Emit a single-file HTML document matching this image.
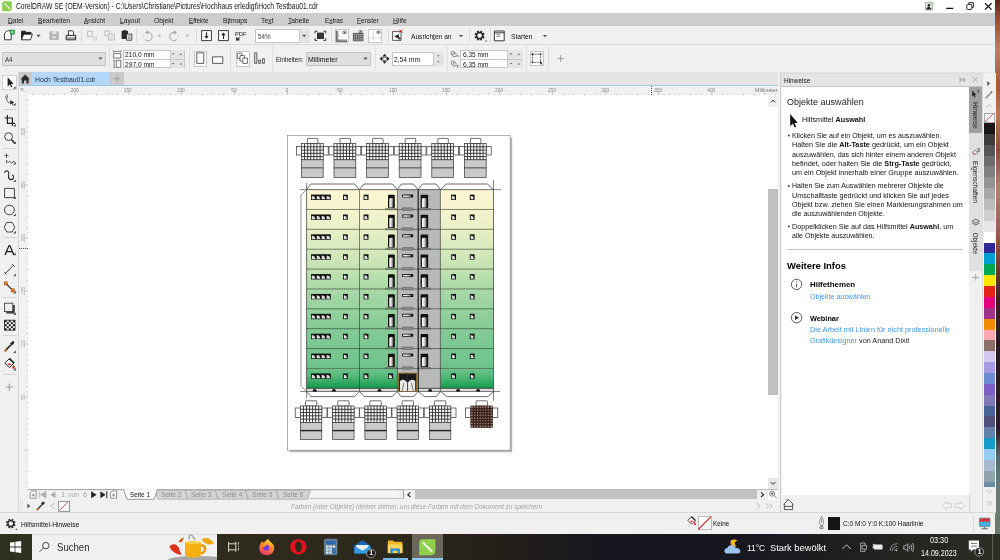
<!DOCTYPE html>
<html lang="de"><head><meta charset="utf-8"><title>CorelDRAW SE</title>
<style>
*{margin:0;padding:0;box-sizing:border-box}
html,body{width:1000px;height:560px;overflow:hidden}
body{position:relative;background:#f0f0f0;font-family:"Liberation Sans",sans-serif;color:#1a1a1a}
.a{position:absolute}
.t{position:absolute;white-space:nowrap;transform-origin:0 50%;display:block}
#root{position:absolute;left:0;top:0;width:1000px;height:560px;will-change:transform;overflow:hidden}
.t b{font-weight:bold}
svg{position:absolute;overflow:visible}
u{text-decoration:underline;text-decoration-thickness:0.5px;text-underline-offset:-0.3px;text-decoration-color:rgba(20,20,20,0.6)}
</style></head><body><div id="root">
<div class="a" style="left:995px;top:0px;width:5px;height:560px;background:linear-gradient(180deg,#5a2a18 0px,#9a5030 20px,#c08060 50px,#a05a3a 85px,#b4785a 115px,#8a4e3c 150px,#b08472 190px,#935c4a 235px,#6a3a30 270px,#40201e 300px,#2a1a22 340px,#2a1e26 430px,#54696c 455px,#66797a 480px,#6a7a6a 534px);"></div>
<div class="a" style="left:0px;top:0px;width:995.3px;height:533.9px;background:#f0f0f0;"></div>
<div class="a" style="left:0px;top:0px;width:995.3px;height:13.5px;background:#ffffff;"></div>
<div class="a" style="left:0px;top:13.2px;width:995.3px;height:12.9px;background:#cdcdcd;"></div>
<div class="a" style="left:0px;top:44px;width:995.3px;height:0.8px;background:#dcdcdc;"></div>
<div class="a" style="left:80.5px;top:28px;width:0.8px;height:15px;background:#dadada;"></div>
<div class="a" style="left:136px;top:28px;width:0.8px;height:15px;background:#dadada;"></div>
<div class="a" style="left:195.8px;top:28px;width:0.8px;height:15px;background:#dadada;"></div>
<div class="a" style="left:331px;top:28px;width:0.8px;height:15px;background:#dadada;"></div>
<div class="a" style="left:387.6px;top:28px;width:0.8px;height:15px;background:#dadada;"></div>
<div class="a" style="left:468.6px;top:28px;width:0.8px;height:15px;background:#dadada;"></div>
<div class="a" style="left:490.4px;top:28px;width:0.8px;height:15px;background:#dadada;"></div>
<div class="a" style="left:109px;top:46px;width:0.8px;height:25px;background:#e0e0e0;"></div>
<div class="a" style="left:189px;top:46px;width:0.8px;height:25px;background:#e0e0e0;"></div>
<div class="a" style="left:230px;top:46px;width:0.8px;height:25px;background:#e0e0e0;"></div>
<div class="a" style="left:271.6px;top:46px;width:0.8px;height:25px;background:#e0e0e0;"></div>
<div class="a" style="left:375px;top:46px;width:0.8px;height:25px;background:#e0e0e0;"></div>
<div class="a" style="left:447px;top:46px;width:0.8px;height:25px;background:#e0e0e0;"></div>
<div class="a" style="left:526px;top:46px;width:0.8px;height:25px;background:#e0e0e0;"></div>
<div class="a" style="left:548px;top:46px;width:0.8px;height:25px;background:#e0e0e0;"></div>
<div class="a" style="left:255px;top:28.5px;width:55px;height:14.8px;background:#fff;border:0.7px solid #c2c2c2"></div>
<div class="a" style="left:298.5px;top:29.2px;width:11px;height:14.1px;background:#e2e2e2;border-left:0.7px solid #c6c6c6"></div>
<div class="a" style="left:2px;top:51.5px;width:103.5px;height:14px;background:#dfdfdf;border:0.7px solid #c4c4c4"></div>
<div class="a" style="left:122.5px;top:49.5px;width:62px;height:18.7px;background:#fff;border:0.7px solid #c6c6c6"></div>
<div class="a" style="left:169.5px;top:50px;width:14.5px;height:17.7px;background:#e4e4e4;border-left:0.7px solid #c6c6c6"></div>
<div class="a" style="left:122.5px;top:58.5px;width:62px;height:0.7px;background:#c6c6c6;"></div>
<div class="a" style="left:193.5px;top:50.5px;width:13.5px;height:16.5px;background:#fff;border:0.7px solid #c6c6c6"></div>
<div class="a" style="left:235.5px;top:50.5px;width:14px;height:16.5px;background:#fff;border:0.7px solid #c6c6c6"></div>
<div class="a" style="left:305.5px;top:51.5px;width:65.5px;height:14px;background:#dfdfdf;border:0.7px solid #c4c4c4"></div>
<div class="a" style="left:391.5px;top:51.5px;width:52.5px;height:14.5px;background:#fff;border:0.7px solid #c6c6c6"></div>
<div class="a" style="left:433px;top:52px;width:10.5px;height:13.5px;background:#e4e4e4;border-left:0.7px solid #c6c6c6"></div>
<div class="a" style="left:459.5px;top:49.5px;width:63.5px;height:18.7px;background:#fff;border:0.7px solid #c6c6c6"></div>
<div class="a" style="left:507px;top:50px;width:15.5px;height:17.7px;background:#e4e4e4;border-left:0.7px solid #c6c6c6"></div>
<div class="a" style="left:459.5px;top:58.5px;width:63.5px;height:0.7px;background:#c6c6c6;"></div>
<div class="a" style="left:529.5px;top:51px;width:14.5px;height:15px;background:#fff;border:0.7px solid #c6c6c6"></div>
<div class="a" style="left:334.5px;top:28.5px;width:14px;height:14.5px;background:#fff;border:0.7px solid #c6c6c6"></div>
<div class="a" style="left:368px;top:28.5px;width:14px;height:14.5px;background:#fff;border:0.7px solid #c6c6c6"></div>
<div class="a" style="left:0px;top:72px;width:995.3px;height:14px;background:#e4e4e4;"></div>
<div class="a" style="left:0px;top:72px;width:18.5px;height:14px;background:#f0f0f0;"></div>
<div class="a" style="left:19px;top:72px;width:12.5px;height:13.3px;background:#c8c8c8;"></div>
<div class="a" style="left:31.5px;top:72px;width:78.5px;height:13.3px;background:#b5d7f7;"></div>
<div class="a" style="left:110px;top:72px;width:13.5px;height:13.3px;background:#c9c9c9;"></div>
<div class="a" style="left:19px;top:84.9px;width:759px;height:1.5px;background:#9ccbea;"></div>
<div class="a" style="left:0px;top:72px;width:18.5px;height:441px;background:#f0f0f0;"></div>
<div class="a" style="left:18.3px;top:72px;width:0.8px;height:441px;background:#d6d6d6;"></div>
<div class="a" style="left:2px;top:74.5px;width:14.5px;height:15px;background:#fff;border:0.7px solid #cfcfcf"></div>
<div class="a" style="left:2.5px;top:109px;width:14px;height:0.8px;background:#d4d4d4;"></div>
<div class="a" style="left:2.5px;top:148px;width:14px;height:0.8px;background:#d4d4d4;"></div>
<div class="a" style="left:2.5px;top:237px;width:14px;height:0.8px;background:#d4d4d4;"></div>
<div class="a" style="left:2.5px;top:297px;width:14px;height:0.8px;background:#d4d4d4;"></div>
<div class="a" style="left:2.5px;top:335px;width:14px;height:0.8px;background:#d4d4d4;"></div>
<div class="a" style="left:2.5px;top:374px;width:14px;height:0.8px;background:#d4d4d4;"></div>
<div class="a" style="left:19px;top:86.3px;width:759px;height:9px;background:#f1f1f1;"></div>
<div class="a" style="left:19px;top:86.3px;width:9px;height:403px;background:#f1f1f1;"></div>
<div class="a" style="left:28px;top:95.3px;width:750px;height:393.5px;background:#ffffff;"></div>
<div class="a" style="left:768px;top:96px;width:10px;height:10.5px;background:#f0f0f0;"></div>
<div class="a" style="left:768px;top:189px;width:9.5px;height:206px;background:#c1c1c1;"></div>
<div class="a" style="left:768px;top:478px;width:10px;height:10.8px;background:#e8e8e8;"></div>
<div class="a" style="left:28px;top:488.8px;width:750px;height:0.9px;background:#bdbdbd;"></div>
<div class="a" style="left:19px;top:489.6px;width:759px;height:10px;background:#f0f0f0;"></div>
<div class="a" style="left:310px;top:489.6px;width:93.5px;height:9.6px;background:#f4f4f4;border-bottom:0.7px solid #c4c4c4;border-right:0.8px solid #999"></div>
<div class="a" style="left:404.5px;top:489.8px;width:363.5px;height:9.6px;background:#f0f0f0;"></div>
<div class="a" style="left:415px;top:490px;width:342px;height:9.3px;background:#c1c1c1;"></div>
<div class="a" style="left:768px;top:489.6px;width:10px;height:10px;background:#fff;"></div>
<div class="a" style="left:58px;top:500.5px;width:11.5px;height:11px;background:#fff;border:0.7px solid #999"></div>
<div class="a" style="left:778px;top:72px;width:3px;height:441px;background:#f0f0f0;"></div>
<div class="a" style="left:780.3px;top:72px;width:0.9px;height:441px;background:#d0d0d0;"></div>
<div class="a" style="left:781px;top:72.5px;width:201.5px;height:14px;background:#e4e4e4;border-bottom:0.8px solid #c6c6c6;border-top:0.8px solid #dadada"></div>
<div class="a" style="left:781.5px;top:87px;width:187.5px;height:407.5px;background:#ffffff;"></div>
<div class="a" style="left:787px;top:248.5px;width:176px;height:0.8px;background:#c4c4c4;"></div>
<div class="a" style="left:969px;top:87px;width:14px;height:425px;background:#f0f0f0;"></div>
<div class="a" style="left:969px;top:87px;width:13.5px;height:184px;background:#e0e0e0;"></div>
<div class="a" style="left:969px;top:87px;width:13.5px;height:46px;background:#a0a0a0;"></div>
<div class="a" style="left:983px;top:72.5px;width:12.5px;height:440px;background:#f0f0f0;"></div>
<div class="a" style="left:984px;top:112.5px;width:10.5px;height:10.5px;background:#fff;border:0.5px solid #aaa"></div>
<div class="a" style="left:984px;top:123.0px;width:10.5px;height:10.97px;background:#181818;"></div>
<div class="a" style="left:984px;top:133.87px;width:10.5px;height:10.97px;background:#3c3c3c;"></div>
<div class="a" style="left:984px;top:144.74px;width:10.5px;height:10.97px;background:#565656;"></div>
<div class="a" style="left:984px;top:155.61px;width:10.5px;height:10.97px;background:#6c6c6c;"></div>
<div class="a" style="left:984px;top:166.48px;width:10.5px;height:10.97px;background:#808080;"></div>
<div class="a" style="left:984px;top:177.35px;width:10.5px;height:10.97px;background:#949494;"></div>
<div class="a" style="left:984px;top:188.22px;width:10.5px;height:10.97px;background:#a8a8a8;"></div>
<div class="a" style="left:984px;top:199.09px;width:10.5px;height:10.97px;background:#bcbcbc;"></div>
<div class="a" style="left:984px;top:209.96px;width:10.5px;height:10.97px;background:#d0d0d0;"></div>
<div class="a" style="left:984px;top:220.83px;width:10.5px;height:10.97px;background:#e6e6e6;"></div>
<div class="a" style="left:984px;top:231.7px;width:10.5px;height:10.97px;background:#ffffff;"></div>
<div class="a" style="left:984px;top:242.57px;width:10.5px;height:10.97px;background:#2e2a96;"></div>
<div class="a" style="left:984px;top:253.44px;width:10.5px;height:10.97px;background:#00a0d2;"></div>
<div class="a" style="left:984px;top:264.31px;width:10.5px;height:10.97px;background:#00a651;"></div>
<div class="a" style="left:984px;top:275.18px;width:10.5px;height:10.97px;background:#ffe600;"></div>
<div class="a" style="left:984px;top:286.05px;width:10.5px;height:10.97px;background:#e2231a;"></div>
<div class="a" style="left:984px;top:296.92px;width:10.5px;height:10.97px;background:#e6007e;"></div>
<div class="a" style="left:984px;top:307.79px;width:10.5px;height:10.97px;background:#a0328c;"></div>
<div class="a" style="left:984px;top:318.66px;width:10.5px;height:10.97px;background:#f08c00;"></div>
<div class="a" style="left:984px;top:329.53px;width:10.5px;height:10.97px;background:#ffa8b4;"></div>
<div class="a" style="left:984px;top:340.4px;width:10.5px;height:10.97px;background:#8c6e64;"></div>
<div class="a" style="left:984px;top:351.27px;width:10.5px;height:10.97px;background:#d2c8f0;"></div>
<div class="a" style="left:984px;top:362.14px;width:10.5px;height:10.97px;background:#a59be1;"></div>
<div class="a" style="left:984px;top:373.01px;width:10.5px;height:10.97px;background:#6e8cd2;"></div>
<div class="a" style="left:984px;top:383.88px;width:10.5px;height:10.97px;background:#7d5fc3;"></div>
<div class="a" style="left:984px;top:394.75px;width:10.5px;height:10.97px;background:#8278b4;"></div>
<div class="a" style="left:984px;top:405.62px;width:10.5px;height:10.97px;background:#466496;"></div>
<div class="a" style="left:984px;top:416.49px;width:10.5px;height:10.97px;background:#505078;"></div>
<div class="a" style="left:984px;top:427.36px;width:10.5px;height:10.97px;background:#6482aa;"></div>
<div class="a" style="left:984px;top:438.23px;width:10.5px;height:10.97px;background:#149bc8;"></div>
<div class="a" style="left:984px;top:449.1px;width:10.5px;height:10.97px;background:#96cdf0;"></div>
<div class="a" style="left:984px;top:459.97px;width:10.5px;height:10.97px;background:#a5b9d2;"></div>
<div class="a" style="left:984px;top:470.84px;width:10.5px;height:10.97px;background:#8ca5af;"></div>
<div class="a" style="left:984px;top:481.71px;width:10.5px;height:5.39px;background:#6e8ca0;"></div>
<div class="a" style="left:969.3px;top:494.5px;width:0.8px;height:18px;background:#d4d4d4;"></div>
<div class="a" style="left:982px;top:72.5px;width:0.8px;height:440px;background:#dcdcdc;"></div>
<div class="a" style="left:0px;top:512.2px;width:995.3px;height:0.8px;background:#d8d8d8;"></div>
<div class="a" style="left:697.5px;top:516px;width:14px;height:14px;background:#fff;border:0.7px solid #bbb"></div>
<div class="a" style="left:827.5px;top:516.5px;width:12.5px;height:13.5px;background:#141414;"></div>
<div class="a" style="left:973.2px;top:516px;width:0.8px;height:14.5px;background:#dcdcdc;"></div>
<div class="a" style="left:0px;top:533.9px;width:1000px;height:26.1px;background:linear-gradient(90deg,#2d3220 0%,#2f2c1e 22%,#2c281c 40%,#241f19 50%,#18171f 60%,#15151e 68%,#1b1a21 78%,#20211f 86%,#262922 95%,#2c2f24 100%);"></div>
<div class="a" style="left:31.5px;top:533.9px;width:185.5px;height:26.1px;background:#f0f0f0;border-top:0.8px solid #dcdcdc"></div>
<div class="a" style="left:412px;top:533.9px;width:31px;height:26.1px;background:#6b675b;"></div>
<div class="a" style="left:382.5px;top:557.6px;width:25.5px;height:2.4px;background:#76b9ed;"></div>
<div class="a" style="left:412px;top:557.6px;width:31px;height:2.4px;background:#8ccaf5;"></div>
<svg style="left:0;top:0" width="1000" height="560" viewBox="0 0 1000 560">
<path d="M32.77 93.6V95.3M38.08 94.4V95.3M43.38 93.6V95.3M48.69 94.4V95.3M53.99 93.6V95.3M59.30 94.4V95.3M64.60 93.6V95.3M69.90 94.4V95.3M75.21 91.5V95.3M80.51 94.4V95.3M85.82 93.6V95.3M91.12 94.4V95.3M96.43 93.6V95.3M101.73 94.4V95.3M107.04 93.6V95.3M112.34 94.4V95.3M117.65 93.6V95.3M122.95 94.4V95.3M128.26 91.5V95.3M133.56 94.4V95.3M138.87 93.6V95.3M144.17 94.4V95.3M149.48 93.6V95.3M154.78 94.4V95.3M160.09 93.6V95.3M165.39 94.4V95.3M170.70 93.6V95.3M176.00 94.4V95.3M181.30 91.5V95.3M186.61 94.4V95.3M191.91 93.6V95.3M197.22 94.4V95.3M202.52 93.6V95.3M207.83 94.4V95.3M213.13 93.6V95.3M218.44 94.4V95.3M223.74 93.6V95.3M229.05 94.4V95.3M234.35 91.5V95.3M239.66 94.4V95.3M244.96 93.6V95.3M250.27 94.4V95.3M255.57 93.6V95.3M260.88 94.4V95.3M266.18 93.6V95.3M271.49 94.4V95.3M276.79 93.6V95.3M282.10 94.4V95.3M287.40 91.5V95.3M292.70 94.4V95.3M298.01 93.6V95.3M303.31 94.4V95.3M308.62 93.6V95.3M313.92 94.4V95.3M319.23 93.6V95.3M324.53 94.4V95.3M329.84 93.6V95.3M335.14 94.4V95.3M340.45 91.5V95.3M345.75 94.4V95.3M351.06 93.6V95.3M356.36 94.4V95.3M361.67 93.6V95.3M366.97 94.4V95.3M372.28 93.6V95.3M377.58 94.4V95.3M382.89 93.6V95.3M388.19 94.4V95.3M393.50 91.5V95.3M398.80 94.4V95.3M404.10 93.6V95.3M409.41 94.4V95.3M414.71 93.6V95.3M420.02 94.4V95.3M425.32 93.6V95.3M430.63 94.4V95.3M435.93 93.6V95.3M441.24 94.4V95.3M446.54 91.5V95.3M451.85 94.4V95.3M457.15 93.6V95.3M462.46 94.4V95.3M467.76 93.6V95.3M473.07 94.4V95.3M478.37 93.6V95.3M483.68 94.4V95.3M488.98 93.6V95.3M494.29 94.4V95.3M499.59 91.5V95.3M504.90 94.4V95.3M510.20 93.6V95.3M515.50 94.4V95.3M520.81 93.6V95.3M526.11 94.4V95.3M531.42 93.6V95.3M536.72 94.4V95.3M542.03 93.6V95.3M547.33 94.4V95.3M552.64 91.5V95.3M557.94 94.4V95.3M563.25 93.6V95.3M568.55 94.4V95.3M573.86 93.6V95.3M579.16 94.4V95.3M584.47 93.6V95.3M589.77 94.4V95.3M595.08 93.6V95.3M600.38 94.4V95.3M605.69 91.5V95.3M610.99 94.4V95.3M616.30 93.6V95.3M621.60 94.4V95.3M626.90 93.6V95.3M632.21 94.4V95.3M637.51 93.6V95.3M642.82 94.4V95.3M648.12 93.6V95.3M653.43 94.4V95.3M658.73 91.5V95.3M664.04 94.4V95.3M669.34 93.6V95.3M674.65 94.4V95.3M679.95 93.6V95.3M685.26 94.4V95.3M690.56 93.6V95.3M695.87 94.4V95.3M701.17 93.6V95.3M706.48 94.4V95.3M711.78 91.5V95.3M717.09 94.4V95.3M722.39 93.6V95.3M727.70 94.4V95.3M733.00 93.6V95.3M738.30 94.4V95.3M743.61 93.6V95.3M748.91 94.4V95.3M754.22 93.6V95.3M759.52 94.4V95.3M764.83 91.5V95.3M770.13 94.4V95.3M775.44 93.6V95.3" stroke="#9c9c9c" stroke-width="0.5" fill="none"/>
<path d="M27.2 487.33H28M26.4 482.03H28M27.2 476.72H28M26.4 471.42H28M27.2 466.11H28M26.4 460.81H28M27.2 455.50H28M24.5 450.20H28M27.2 444.90H28M26.4 439.59H28M27.2 434.29H28M26.4 428.98H28M27.2 423.68H28M26.4 418.37H28M27.2 413.07H28M26.4 407.76H28M27.2 402.46H28M24.5 397.15H28M27.2 391.85H28M26.4 386.54H28M27.2 381.24H28M26.4 375.93H28M27.2 370.63H28M26.4 365.32H28M27.2 360.02H28M26.4 354.71H28M27.2 349.41H28M24.5 344.10H28M27.2 338.80H28M26.4 333.50H28M27.2 328.19H28M26.4 322.89H28M27.2 317.58H28M26.4 312.28H28M27.2 306.97H28M26.4 301.67H28M27.2 296.36H28M24.5 291.06H28M27.2 285.75H28M26.4 280.45H28M27.2 275.14H28M26.4 269.84H28M27.2 264.53H28M26.4 259.23H28M27.2 253.92H28M26.4 248.62H28M27.2 243.31H28M24.5 238.01H28M27.2 232.70H28M26.4 227.40H28M27.2 222.10H28M26.4 216.79H28M27.2 211.49H28M26.4 206.18H28M27.2 200.88H28M26.4 195.57H28M27.2 190.27H28M24.5 184.96H28M27.2 179.66H28M26.4 174.35H28M27.2 169.05H28M26.4 163.74H28M27.2 158.44H28M26.4 153.13H28M27.2 147.83H28M26.4 142.52H28M27.2 137.22H28M24.5 131.91H28M27.2 126.61H28M26.4 121.30H28M27.2 116.00H28M26.4 110.70H28M27.2 105.39H28M26.4 100.09H28" stroke="#9c9c9c" stroke-width="0.5" fill="none"/>
<path d="M651.5 86V95" stroke="#222" stroke-width="0.8" stroke-dasharray="1 1" fill="none"/>
<path d="M19 248.5H28" stroke="#222" stroke-width="0.8" stroke-dasharray="1 1" fill="none"/>
<text x="74.7" y="92" font-size="4.8" fill="#858585" text-anchor="middle" font-family="Liberation Sans, sans-serif">200</text>
<text x="127.8" y="92" font-size="4.8" fill="#858585" text-anchor="middle" font-family="Liberation Sans, sans-serif">150</text>
<text x="180.8" y="92" font-size="4.8" fill="#858585" text-anchor="middle" font-family="Liberation Sans, sans-serif">100</text>
<text x="233.9" y="92" font-size="4.8" fill="#858585" text-anchor="middle" font-family="Liberation Sans, sans-serif">50</text>
<text x="286.9" y="92" font-size="4.8" fill="#858585" text-anchor="middle" font-family="Liberation Sans, sans-serif">0</text>
<text x="339.9" y="92" font-size="4.8" fill="#858585" text-anchor="middle" font-family="Liberation Sans, sans-serif">50</text>
<text x="393.0" y="92" font-size="4.8" fill="#858585" text-anchor="middle" font-family="Liberation Sans, sans-serif">100</text>
<text x="446.0" y="92" font-size="4.8" fill="#858585" text-anchor="middle" font-family="Liberation Sans, sans-serif">150</text>
<text x="499.1" y="92" font-size="4.8" fill="#858585" text-anchor="middle" font-family="Liberation Sans, sans-serif">200</text>
<text x="552.1" y="92" font-size="4.8" fill="#858585" text-anchor="middle" font-family="Liberation Sans, sans-serif">250</text>
<text x="605.2" y="92" font-size="4.8" fill="#858585" text-anchor="middle" font-family="Liberation Sans, sans-serif">300</text>
<text x="658.2" y="92" font-size="4.8" fill="#858585" text-anchor="middle" font-family="Liberation Sans, sans-serif">350</text>
<text x="711.3" y="92" font-size="4.8" fill="#858585" text-anchor="middle" font-family="Liberation Sans, sans-serif">400</text>
<text transform="translate(24.6 396.9) rotate(-90)" font-size="4.6" fill="#9a9a9a" text-anchor="middle" font-family="Liberation Sans, sans-serif">50</text>
<text transform="translate(24.6 343.8) rotate(-90)" font-size="4.6" fill="#9a9a9a" text-anchor="middle" font-family="Liberation Sans, sans-serif">100</text>
<text transform="translate(24.6 290.8) rotate(-90)" font-size="4.6" fill="#9a9a9a" text-anchor="middle" font-family="Liberation Sans, sans-serif">150</text>
<text transform="translate(24.6 237.7) rotate(-90)" font-size="4.6" fill="#9a9a9a" text-anchor="middle" font-family="Liberation Sans, sans-serif">200</text>
<text transform="translate(24.6 184.7) rotate(-90)" font-size="4.6" fill="#9a9a9a" text-anchor="middle" font-family="Liberation Sans, sans-serif">250</text>
<text transform="translate(24.6 131.6) rotate(-90)" font-size="4.6" fill="#9a9a9a" text-anchor="middle" font-family="Liberation Sans, sans-serif">300</text>
</svg>
<svg style="left:0;top:0" width="1000" height="560" viewBox="0 0 1000 560">
<defs>
<linearGradient id="bg" x1="0" y1="0" x2="0" y2="1">
<stop offset="0" stop-color="#fdf6d4"/><stop offset="0.1" stop-color="#f6f4ce"/><stop offset="0.2" stop-color="#eaf0c7"/>
<stop offset="0.3" stop-color="#dcebbf"/><stop offset="0.4" stop-color="#cbe5b6"/><stop offset="0.5" stop-color="#b6ddac"/>
<stop offset="0.6" stop-color="#a2d6a4"/><stop offset="0.7" stop-color="#90cf9c"/><stop offset="0.8" stop-color="#82ca95"/>
<stop offset="0.9" stop-color="#78c690"/><stop offset="1" stop-color="#6ec28a"/></linearGradient>
<linearGradient id="gf" x1="0" y1="0" x2="0" y2="1"><stop offset="0" stop-color="#6ec28a"/><stop offset="0.35" stop-color="#58ba7c"/><stop offset="1" stop-color="#129a4c"/></linearGradient>
<linearGradient id="doorg" x1="0" y1="0" x2="1" y2="0"><stop offset="0" stop-color="#ffffff"/><stop offset="0.45" stop-color="#e4e4e4"/><stop offset="1" stop-color="#5a5a5a"/></linearGradient>
<linearGradient id="hwing" x1="0" y1="0" x2="1" y2="0"><stop offset="0" stop-color="#ffffff"/><stop offset="0.6" stop-color="#d8d8d8"/><stop offset="1" stop-color="#606060"/></linearGradient>
<linearGradient id="baseg" x1="0" y1="0" x2="0" y2="1"><stop offset="0" stop-color="#9a9a9a"/><stop offset="0.5" stop-color="#f4f4f4"/><stop offset="1" stop-color="#cfcfcf"/></linearGradient>
</defs>
<rect x="289.6" y="137.6" width="222.6" height="314.6" fill="#b4b4b4"/>
<rect x="287.4" y="135.6" width="222.8" height="314.6" fill="#fff" stroke="#8e8e8e" stroke-width="0.7"/>
<rect x="307.4" y="138.4" width="10.5" height="5.2" fill="#fff" stroke="#333" stroke-width="0.7" rx="0.6"/>
<rect x="296.4" y="146.6" width="5" height="8.4" fill="#fff" stroke="#333" stroke-width="0.7" />
<rect x="323.2" y="146.6" width="5" height="8.4" fill="#fff" stroke="#333" stroke-width="0.7" />
<rect x="301.4" y="143.6" width="21.8" height="16.2" fill="#fff" stroke="#2a2a2a" stroke-width="0.7" />
<path d="M304.51 143.6V159.8M307.63 143.6V159.8M310.74 143.6V159.8M313.86 143.6V159.8M316.97 143.6V159.8M320.09 143.6V159.8M301.4 146.84H323.2M301.4 150.08H323.2M301.4 153.32H323.2M301.4 156.56H323.2" stroke="#2a2a2a" stroke-width="0.9" fill="none"/>
<rect x="301.4" y="159.8" width="21.8" height="8.2" fill="#c9c9c9" stroke="#3a3a3a" stroke-width="0.7" />
<rect x="301.4" y="168" width="21.8" height="9.6" fill="#c9c9c9" stroke="#3a3a3a" stroke-width="0.7" />
<rect x="340" y="138.4" width="10.5" height="5.2" fill="#fff" stroke="#333" stroke-width="0.7" rx="0.6"/>
<rect x="329" y="146.6" width="5" height="8.4" fill="#fff" stroke="#333" stroke-width="0.7" />
<rect x="355.8" y="146.6" width="5" height="8.4" fill="#fff" stroke="#333" stroke-width="0.7" />
<rect x="334" y="143.6" width="21.8" height="16.2" fill="#fff" stroke="#2a2a2a" stroke-width="0.7" />
<path d="M337.11 143.6V159.8M340.23 143.6V159.8M343.34 143.6V159.8M346.46 143.6V159.8M349.57 143.6V159.8M352.69 143.6V159.8M334 146.84H355.8M334 150.08H355.8M334 153.32H355.8M334 156.56H355.8" stroke="#2a2a2a" stroke-width="0.9" fill="none"/>
<rect x="334" y="159.8" width="21.8" height="8.2" fill="#c9c9c9" stroke="#3a3a3a" stroke-width="0.7" />
<rect x="334" y="168" width="21.8" height="9.6" fill="#c9c9c9" stroke="#3a3a3a" stroke-width="0.7" />
<rect x="372.6" y="138.4" width="10.5" height="5.2" fill="#fff" stroke="#333" stroke-width="0.7" rx="0.6"/>
<rect x="361.6" y="146.6" width="5" height="8.4" fill="#fff" stroke="#333" stroke-width="0.7" />
<rect x="388.4" y="146.6" width="5" height="8.4" fill="#fff" stroke="#333" stroke-width="0.7" />
<rect x="366.6" y="143.6" width="21.8" height="16.2" fill="#fff" stroke="#2a2a2a" stroke-width="0.7" />
<path d="M369.71 143.6V159.8M372.83 143.6V159.8M375.94 143.6V159.8M379.06 143.6V159.8M382.17 143.6V159.8M385.29 143.6V159.8M366.6 146.84H388.4M366.6 150.08H388.4M366.6 153.32H388.4M366.6 156.56H388.4" stroke="#2a2a2a" stroke-width="0.9" fill="none"/>
<rect x="366.6" y="159.8" width="21.8" height="8.2" fill="#c9c9c9" stroke="#3a3a3a" stroke-width="0.7" />
<rect x="366.6" y="168" width="21.8" height="9.6" fill="#c9c9c9" stroke="#3a3a3a" stroke-width="0.7" />
<rect x="405.2" y="138.4" width="10.5" height="5.2" fill="#fff" stroke="#333" stroke-width="0.7" rx="0.6"/>
<rect x="394.2" y="146.6" width="5" height="8.4" fill="#fff" stroke="#333" stroke-width="0.7" />
<rect x="421" y="146.6" width="5" height="8.4" fill="#fff" stroke="#333" stroke-width="0.7" />
<rect x="399.2" y="143.6" width="21.8" height="16.2" fill="#fff" stroke="#2a2a2a" stroke-width="0.7" />
<path d="M402.31 143.6V159.8M405.43 143.6V159.8M408.54 143.6V159.8M411.66 143.6V159.8M414.77 143.6V159.8M417.89 143.6V159.8M399.2 146.84H421M399.2 150.08H421M399.2 153.32H421M399.2 156.56H421" stroke="#2a2a2a" stroke-width="0.9" fill="none"/>
<rect x="399.2" y="159.8" width="21.8" height="8.2" fill="#c9c9c9" stroke="#3a3a3a" stroke-width="0.7" />
<rect x="399.2" y="168" width="21.8" height="9.6" fill="#c9c9c9" stroke="#3a3a3a" stroke-width="0.7" />
<rect x="437.8" y="138.4" width="10.5" height="5.2" fill="#fff" stroke="#333" stroke-width="0.7" rx="0.6"/>
<rect x="426.8" y="146.6" width="5" height="8.4" fill="#fff" stroke="#333" stroke-width="0.7" />
<rect x="453.6" y="146.6" width="5" height="8.4" fill="#fff" stroke="#333" stroke-width="0.7" />
<rect x="431.8" y="143.6" width="21.8" height="16.2" fill="#fff" stroke="#2a2a2a" stroke-width="0.7" />
<path d="M434.91 143.6V159.8M438.03 143.6V159.8M441.14 143.6V159.8M444.26 143.6V159.8M447.37 143.6V159.8M450.49 143.6V159.8M431.8 146.84H453.6M431.8 150.08H453.6M431.8 153.32H453.6M431.8 156.56H453.6" stroke="#2a2a2a" stroke-width="0.9" fill="none"/>
<rect x="431.8" y="159.8" width="21.8" height="8.2" fill="#c9c9c9" stroke="#3a3a3a" stroke-width="0.7" />
<rect x="431.8" y="168" width="21.8" height="9.6" fill="#c9c9c9" stroke="#3a3a3a" stroke-width="0.7" />
<rect x="470.4" y="138.4" width="10.5" height="5.2" fill="#fff" stroke="#333" stroke-width="0.7" rx="0.6"/>
<rect x="459.4" y="146.6" width="5" height="8.4" fill="#fff" stroke="#333" stroke-width="0.7" />
<rect x="486.2" y="146.6" width="5" height="8.4" fill="#fff" stroke="#333" stroke-width="0.7" />
<rect x="464.4" y="143.6" width="21.8" height="16.2" fill="#fff" stroke="#2a2a2a" stroke-width="0.7" />
<path d="M467.51 143.6V159.8M470.63 143.6V159.8M473.74 143.6V159.8M476.86 143.6V159.8M479.97 143.6V159.8M483.09 143.6V159.8M464.4 146.84H486.2M464.4 150.08H486.2M464.4 153.32H486.2M464.4 156.56H486.2" stroke="#2a2a2a" stroke-width="0.9" fill="none"/>
<rect x="464.4" y="159.8" width="21.8" height="8.2" fill="#c9c9c9" stroke="#3a3a3a" stroke-width="0.7" />
<rect x="464.4" y="168" width="21.8" height="9.6" fill="#c9c9c9" stroke="#3a3a3a" stroke-width="0.7" />
<rect x="305.4" y="400.8" width="11.4" height="5.2" fill="#fff" stroke="#333" stroke-width="0.7" rx="0.6"/>
<rect x="295.2" y="408" width="5.2" height="9.4" fill="#fff" stroke="#333" stroke-width="0.7" />
<rect x="321.8" y="408" width="5.2" height="9.4" fill="#fff" stroke="#333" stroke-width="0.7" />
<rect x="300.4" y="406" width="21.4" height="16.4" fill="#fff" stroke="#2a2a2a" stroke-width="0.7" />
<path d="M303.46 406V422.4M306.51 406V422.4M309.57 406V422.4M312.63 406V422.4M315.69 406V422.4M318.74 406V422.4M300.4 409.28H321.8M300.4 412.56H321.8M300.4 415.84H321.8M300.4 419.12H321.8" stroke="#2a2a2a" stroke-width="0.9" fill="none"/>
<rect x="300.4" y="422.4" width="21.4" height="8" fill="#c9c9c9" stroke="#3a3a3a" stroke-width="0.7" />
<rect x="300.4" y="430.4" width="21.4" height="9.2" fill="#c9c9c9" stroke="#3a3a3a" stroke-width="0.7" />
<path d="M300.4 430.6H321.8" stroke="#222" stroke-width="1.4"/>
<rect x="337.65" y="400.8" width="11.4" height="5.2" fill="#fff" stroke="#333" stroke-width="0.7" rx="0.6"/>
<rect x="327.45" y="408" width="5.2" height="9.4" fill="#fff" stroke="#333" stroke-width="0.7" />
<rect x="354.05" y="408" width="5.2" height="9.4" fill="#fff" stroke="#333" stroke-width="0.7" />
<rect x="332.65" y="406" width="21.4" height="16.4" fill="#fff" stroke="#2a2a2a" stroke-width="0.7" />
<path d="M335.71 406V422.4M338.76 406V422.4M341.82 406V422.4M344.88 406V422.4M347.94 406V422.4M350.99 406V422.4M332.65 409.28H354.05M332.65 412.56H354.05M332.65 415.84H354.05M332.65 419.12H354.05" stroke="#2a2a2a" stroke-width="0.9" fill="none"/>
<rect x="332.65" y="422.4" width="21.4" height="8" fill="#c9c9c9" stroke="#3a3a3a" stroke-width="0.7" />
<rect x="332.65" y="430.4" width="21.4" height="9.2" fill="#c9c9c9" stroke="#3a3a3a" stroke-width="0.7" />
<path d="M332.65 430.6H354.05" stroke="#222" stroke-width="1.4"/>
<rect x="369.9" y="400.8" width="11.4" height="5.2" fill="#fff" stroke="#333" stroke-width="0.7" rx="0.6"/>
<rect x="359.7" y="408" width="5.2" height="9.4" fill="#fff" stroke="#333" stroke-width="0.7" />
<rect x="386.3" y="408" width="5.2" height="9.4" fill="#fff" stroke="#333" stroke-width="0.7" />
<rect x="364.9" y="406" width="21.4" height="16.4" fill="#fff" stroke="#2a2a2a" stroke-width="0.7" />
<path d="M367.96 406V422.4M371.01 406V422.4M374.07 406V422.4M377.13 406V422.4M380.19 406V422.4M383.24 406V422.4M364.9 409.28H386.3M364.9 412.56H386.3M364.9 415.84H386.3M364.9 419.12H386.3" stroke="#2a2a2a" stroke-width="0.9" fill="none"/>
<rect x="364.9" y="422.4" width="21.4" height="8" fill="#c9c9c9" stroke="#3a3a3a" stroke-width="0.7" />
<rect x="364.9" y="430.4" width="21.4" height="9.2" fill="#c9c9c9" stroke="#3a3a3a" stroke-width="0.7" />
<path d="M364.9 430.6H386.3" stroke="#222" stroke-width="1.4"/>
<rect x="402.15" y="400.8" width="11.4" height="5.2" fill="#fff" stroke="#333" stroke-width="0.7" rx="0.6"/>
<rect x="391.95" y="408" width="5.2" height="9.4" fill="#fff" stroke="#333" stroke-width="0.7" />
<rect x="418.55" y="408" width="5.2" height="9.4" fill="#fff" stroke="#333" stroke-width="0.7" />
<rect x="397.15" y="406" width="21.4" height="16.4" fill="#fff" stroke="#2a2a2a" stroke-width="0.7" />
<path d="M400.21 406V422.4M403.26 406V422.4M406.32 406V422.4M409.38 406V422.4M412.44 406V422.4M415.49 406V422.4M397.15 409.28H418.55M397.15 412.56H418.55M397.15 415.84H418.55M397.15 419.12H418.55" stroke="#2a2a2a" stroke-width="0.9" fill="none"/>
<rect x="397.15" y="422.4" width="21.4" height="8" fill="#c9c9c9" stroke="#3a3a3a" stroke-width="0.7" />
<rect x="397.15" y="430.4" width="21.4" height="9.2" fill="#c9c9c9" stroke="#3a3a3a" stroke-width="0.7" />
<path d="M397.15 430.6H418.55" stroke="#222" stroke-width="1.4"/>
<rect x="434.4" y="400.8" width="11.4" height="5.2" fill="#fff" stroke="#333" stroke-width="0.7" rx="0.6"/>
<rect x="424.2" y="408" width="5.2" height="9.4" fill="#fff" stroke="#333" stroke-width="0.7" />
<rect x="450.8" y="408" width="5.2" height="9.4" fill="#fff" stroke="#333" stroke-width="0.7" />
<rect x="429.4" y="406" width="21.4" height="16.4" fill="#fff" stroke="#2a2a2a" stroke-width="0.7" />
<path d="M432.46 406V422.4M435.51 406V422.4M438.57 406V422.4M441.63 406V422.4M444.69 406V422.4M447.74 406V422.4M429.4 409.28H450.8M429.4 412.56H450.8M429.4 415.84H450.8M429.4 419.12H450.8" stroke="#2a2a2a" stroke-width="0.9" fill="none"/>
<rect x="429.4" y="422.4" width="21.4" height="8" fill="#c9c9c9" stroke="#3a3a3a" stroke-width="0.7" />
<rect x="429.4" y="430.4" width="21.4" height="9.2" fill="#c9c9c9" stroke="#3a3a3a" stroke-width="0.7" />
<path d="M429.4 430.6H450.8" stroke="#222" stroke-width="1.4"/>
<rect x="476" y="400.8" width="11.4" height="5.2" fill="#fff" stroke="#333" stroke-width="0.7" rx="0.6"/>
<rect x="465.4" y="408" width="5.4" height="9.4" fill="#fff" stroke="#333" stroke-width="0.7" />
<rect x="492.4" y="408" width="5.4" height="9.4" fill="#fff" stroke="#333" stroke-width="0.7" />
<rect x="470.8" y="406" width="21.6" height="21.5" fill="#a39a96" stroke="#40241c" stroke-width="0.7" />
<path d="M473.5 406V427.5M476.2 406V427.5M478.9 406V427.5M481.6 406V427.5M484.3 406V427.5M487 406V427.5M489.7 406V427.5M470.8 408.69H492.4M470.8 411.38H492.4M470.8 414.06H492.4M470.8 416.75H492.4M470.8 419.44H492.4M470.8 422.12H492.4M470.8 424.81H492.4" stroke="#40241c" stroke-width="1.6" fill="none"/>
<path d="M306.6 189.6L310.5 184H354.5L359.5 189.6" fill="#fff" stroke="#2a2a2a" stroke-width="0.7"/>
<path d="M359.5 189.6L363.8 184H392.4L397.4 189.6" fill="#fff" stroke="#2a2a2a" stroke-width="0.7"/>
<path d="M397.4 189.6L401.4 184H413.4L418.2 189.6" fill="#fff" stroke="#2a2a2a" stroke-width="0.7"/>
<path d="M418.2 189.6L422.4 184H436.2L440.4 189.6" fill="#fff" stroke="#2a2a2a" stroke-width="0.7"/>
<path d="M440.4 189.6L446.4 184H487.3L493.5 189.6" fill="#fff" stroke="#2a2a2a" stroke-width="0.7"/>
<path d="M306.6 391.5L310.9 396.6H354.6L359.5 391.5" fill="#fff" stroke="#2a2a2a" stroke-width="0.7"/>
<path d="M359.5 391.5L364.2 396.6H392L397.4 391.5" fill="#fff" stroke="#2a2a2a" stroke-width="0.7"/>
<path d="M397.4 391.5L401 396.6H413.6L418.2 391.5" fill="#fff" stroke="#2a2a2a" stroke-width="0.7"/>
<path d="M418.2 391.5L424.4 396.6H436.4L440.4 391.5" fill="#fff" stroke="#2a2a2a" stroke-width="0.7"/>
<path d="M440.4 391.5L447.2 396.6H488L493.5 391.5" fill="#fff" stroke="#2a2a2a" stroke-width="0.7"/>
<path d="M306.6 189.6L301 195V385.8L306.6 391.4" fill="#fff" stroke="#444" stroke-width="0.6"/>
<rect x="306.6" y="189.6" width="186.9" height="178.83" fill="url(#bg)"/>
<rect x="306.6" y="368.43" width="186.9" height="19.87" fill="url(#gf)"/>
<rect x="397.4" y="189.6" width="43" height="198.7" fill="#b9b9b9"/>
<rect x="306.6" y="388.3" width="186.9" height="3.1" fill="url(#baseg)"/>
<path d="M306.6 209.47H493.5M306.6 229.34H493.5M306.6 249.21H493.5M306.6 269.08H493.5M306.6 288.95H493.5M306.6 308.82H493.5M306.6 328.69H493.5M306.6 348.56H493.5M306.6 368.43H493.5" stroke="#2e3a2e" stroke-width="0.6" fill="none"/>
<path d="M306.6 189.6H493.5V391.4H306.6Z" fill="none" stroke="#333" stroke-width="0.7"/>
<path d="M359.5 189.6V391.4M397.4 189.6V391.4M440.4 189.6V391.4" stroke="#333" stroke-width="0.6" fill="none"/>
<path d="M418.2 189.6V391.4" stroke="#111" stroke-width="1.1" fill="none"/>
<path d="M306.6 388.3H493.5" stroke="#222" stroke-width="0.7" fill="none"/>
<path d="M306.6 182.8V189.6M299.6 189.6H306.6M493.5 179.8V189.6M493.5 189.6H501M300 391.5H306.6M306.6 391.5V398.4M493.5 391.5H500M493.5 391V400.8" stroke="#333" stroke-width="0.6" fill="none"/>
<rect x="311" y="194.6" width="19.8" height="5.4" fill="#111" stroke="none" stroke-width="0" /><path d="M311.8 199.3V196L314.35 196.6L315.45 199.3Z" fill="#dedede"/><path d="M316.75 199.3V196L319.3 196.6L320.4 199.3Z" fill="#dedede"/><path d="M321.7 199.3V196L324.25 196.6L325.35 199.3Z" fill="#dedede"/><path d="M326.65 199.3V196L329.2 196.6L330.3 199.3Z" fill="#dedede"/>
<rect x="343" y="194.6" width="4.8" height="5.4" fill="#111" stroke="none" stroke-width="0" /><path d="M343.9 199.3V195.8L346.3 196.6L346.9 199.3Z" fill="#e2e2e2"/>
<rect x="363.6" y="194.6" width="4.9" height="5.4" fill="#111" stroke="none" stroke-width="0" /><path d="M364.5 199.3V195.8L367 196.6L367.6 199.3Z" fill="#e2e2e2"/>
<rect x="451.2" y="194.6" width="4.8" height="5.4" fill="#111" stroke="none" stroke-width="0" /><path d="M452.1 199.3V195.8L454.5 196.6L455.1 199.3Z" fill="#e2e2e2"/>
<rect x="469.8" y="194.6" width="4.8" height="5.4" fill="#111" stroke="none" stroke-width="0" /><path d="M470.7 199.3V195.8L473.1 196.6L473.7 199.3Z" fill="#e2e2e2"/>
<rect x="388" y="194.8" width="6.8" height="13.3" fill="#111" stroke="none" stroke-width="0" rx="0.8"/><path d="M389.3 207.4V199Q389.6 197.4 393.2 198.2V207.4Z" fill="url(#doorg)"/>
<rect x="385" y="208.1" width="12" height="2.2" rx="0.6" fill="#5f6f63" fill-opacity="0.7"/>
<rect x="402.2" y="194.6" width="11" height="3" fill="#111" stroke="none" stroke-width="0" rx="0.5"/><rect x="403.2" y="195.4" width="8" height="1.5" fill="url(#hwing)"/>
<rect x="402" y="207.8" width="11.2" height="2.6" rx="0.7" fill="#8a8a8a" stroke="#555" stroke-width="0.5"/>
<rect x="420.6" y="194.8" width="7.6" height="13.3" fill="#111" stroke="none" stroke-width="0" rx="0.8"/><path d="M421.9 207.4V199Q422.2 197.4 426.6 198.2V207.4Z" fill="url(#doorg)"/>
<rect x="418.8" y="208.1" width="12.2" height="2.2" rx="0.6" fill="#6a6a6a" fill-opacity="0.75"/>
<rect x="311" y="214.47" width="19.8" height="5.4" fill="#111" stroke="none" stroke-width="0" /><path d="M311.8 219.17V215.87L314.35 216.47L315.45 219.17Z" fill="#dedede"/><path d="M316.75 219.17V215.87L319.3 216.47L320.4 219.17Z" fill="#dedede"/><path d="M321.7 219.17V215.87L324.25 216.47L325.35 219.17Z" fill="#dedede"/><path d="M326.65 219.17V215.87L329.2 216.47L330.3 219.17Z" fill="#dedede"/>
<rect x="343" y="214.47" width="4.8" height="5.4" fill="#111" stroke="none" stroke-width="0" /><path d="M343.9 219.17V215.67L346.3 216.47L346.9 219.17Z" fill="#e2e2e2"/>
<rect x="363.6" y="214.47" width="4.9" height="5.4" fill="#111" stroke="none" stroke-width="0" /><path d="M364.5 219.17V215.67L367 216.47L367.6 219.17Z" fill="#e2e2e2"/>
<rect x="451.2" y="214.47" width="4.8" height="5.4" fill="#111" stroke="none" stroke-width="0" /><path d="M452.1 219.17V215.67L454.5 216.47L455.1 219.17Z" fill="#e2e2e2"/>
<rect x="469.8" y="214.47" width="4.8" height="5.4" fill="#111" stroke="none" stroke-width="0" /><path d="M470.7 219.17V215.67L473.1 216.47L473.7 219.17Z" fill="#e2e2e2"/>
<rect x="388" y="214.67" width="6.8" height="13.3" fill="#111" stroke="none" stroke-width="0" rx="0.8"/><path d="M389.3 227.27V218.87Q389.6 217.27 393.2 218.07V227.27Z" fill="url(#doorg)"/>
<rect x="385" y="227.97" width="12" height="2.2" rx="0.6" fill="#5f6f63" fill-opacity="0.7"/>
<rect x="402.2" y="214.47" width="11" height="3" fill="#111" stroke="none" stroke-width="0" rx="0.5"/><rect x="403.2" y="215.27" width="8" height="1.5" fill="url(#hwing)"/>
<rect x="402" y="227.67" width="11.2" height="2.6" rx="0.7" fill="#8a8a8a" stroke="#555" stroke-width="0.5"/>
<rect x="420.6" y="214.67" width="7.6" height="13.3" fill="#111" stroke="none" stroke-width="0" rx="0.8"/><path d="M421.9 227.27V218.87Q422.2 217.27 426.6 218.07V227.27Z" fill="url(#doorg)"/>
<rect x="418.8" y="227.97" width="12.2" height="2.2" rx="0.6" fill="#6a6a6a" fill-opacity="0.75"/>
<rect x="311" y="234.34" width="19.8" height="5.4" fill="#111" stroke="none" stroke-width="0" /><path d="M311.8 239.04V235.74L314.35 236.34L315.45 239.04Z" fill="#dedede"/><path d="M316.75 239.04V235.74L319.3 236.34L320.4 239.04Z" fill="#dedede"/><path d="M321.7 239.04V235.74L324.25 236.34L325.35 239.04Z" fill="#dedede"/><path d="M326.65 239.04V235.74L329.2 236.34L330.3 239.04Z" fill="#dedede"/>
<rect x="343" y="234.34" width="4.8" height="5.4" fill="#111" stroke="none" stroke-width="0" /><path d="M343.9 239.04V235.54L346.3 236.34L346.9 239.04Z" fill="#e2e2e2"/>
<rect x="363.6" y="234.34" width="4.9" height="5.4" fill="#111" stroke="none" stroke-width="0" /><path d="M364.5 239.04V235.54L367 236.34L367.6 239.04Z" fill="#e2e2e2"/>
<rect x="451.2" y="234.34" width="4.8" height="5.4" fill="#111" stroke="none" stroke-width="0" /><path d="M452.1 239.04V235.54L454.5 236.34L455.1 239.04Z" fill="#e2e2e2"/>
<rect x="469.8" y="234.34" width="4.8" height="5.4" fill="#111" stroke="none" stroke-width="0" /><path d="M470.7 239.04V235.54L473.1 236.34L473.7 239.04Z" fill="#e2e2e2"/>
<rect x="388" y="234.54" width="6.8" height="13.3" fill="#111" stroke="none" stroke-width="0" rx="0.8"/><path d="M389.3 247.14V238.74Q389.6 237.14 393.2 237.94V247.14Z" fill="url(#doorg)"/>
<rect x="385" y="247.84" width="12" height="2.2" rx="0.6" fill="#5f6f63" fill-opacity="0.7"/>
<rect x="402.2" y="234.34" width="11" height="3" fill="#111" stroke="none" stroke-width="0" rx="0.5"/><rect x="403.2" y="235.14" width="8" height="1.5" fill="url(#hwing)"/>
<rect x="402" y="247.54" width="11.2" height="2.6" rx="0.7" fill="#8a8a8a" stroke="#555" stroke-width="0.5"/>
<rect x="420.6" y="234.54" width="7.6" height="13.3" fill="#111" stroke="none" stroke-width="0" rx="0.8"/><path d="M421.9 247.14V238.74Q422.2 237.14 426.6 237.94V247.14Z" fill="url(#doorg)"/>
<rect x="418.8" y="247.84" width="12.2" height="2.2" rx="0.6" fill="#6a6a6a" fill-opacity="0.75"/>
<rect x="311" y="254.21" width="19.8" height="5.4" fill="#111" stroke="none" stroke-width="0" /><path d="M311.8 258.91V255.61L314.35 256.21L315.45 258.91Z" fill="#dedede"/><path d="M316.75 258.91V255.61L319.3 256.21L320.4 258.91Z" fill="#dedede"/><path d="M321.7 258.91V255.61L324.25 256.21L325.35 258.91Z" fill="#dedede"/><path d="M326.65 258.91V255.61L329.2 256.21L330.3 258.91Z" fill="#dedede"/>
<rect x="343" y="254.21" width="4.8" height="5.4" fill="#111" stroke="none" stroke-width="0" /><path d="M343.9 258.91V255.41L346.3 256.21L346.9 258.91Z" fill="#e2e2e2"/>
<rect x="363.6" y="254.21" width="4.9" height="5.4" fill="#111" stroke="none" stroke-width="0" /><path d="M364.5 258.91V255.41L367 256.21L367.6 258.91Z" fill="#e2e2e2"/>
<rect x="451.2" y="254.21" width="4.8" height="5.4" fill="#111" stroke="none" stroke-width="0" /><path d="M452.1 258.91V255.41L454.5 256.21L455.1 258.91Z" fill="#e2e2e2"/>
<rect x="469.8" y="254.21" width="4.8" height="5.4" fill="#111" stroke="none" stroke-width="0" /><path d="M470.7 258.91V255.41L473.1 256.21L473.7 258.91Z" fill="#e2e2e2"/>
<rect x="388" y="254.41" width="6.8" height="13.3" fill="#111" stroke="none" stroke-width="0" rx="0.8"/><path d="M389.3 267.01V258.61Q389.6 257.01 393.2 257.81V267.01Z" fill="url(#doorg)"/>
<rect x="385" y="267.71" width="12" height="2.2" rx="0.6" fill="#5f6f63" fill-opacity="0.7"/>
<rect x="402.2" y="254.21" width="11" height="3" fill="#111" stroke="none" stroke-width="0" rx="0.5"/><rect x="403.2" y="255.01" width="8" height="1.5" fill="url(#hwing)"/>
<rect x="402" y="267.41" width="11.2" height="2.6" rx="0.7" fill="#8a8a8a" stroke="#555" stroke-width="0.5"/>
<rect x="420.6" y="254.41" width="7.6" height="13.3" fill="#111" stroke="none" stroke-width="0" rx="0.8"/><path d="M421.9 267.01V258.61Q422.2 257.01 426.6 257.81V267.01Z" fill="url(#doorg)"/>
<rect x="418.8" y="267.71" width="12.2" height="2.2" rx="0.6" fill="#6a6a6a" fill-opacity="0.75"/>
<rect x="311" y="274.08" width="19.8" height="5.4" fill="#111" stroke="none" stroke-width="0" /><path d="M311.8 278.78V275.48L314.35 276.08L315.45 278.78Z" fill="#dedede"/><path d="M316.75 278.78V275.48L319.3 276.08L320.4 278.78Z" fill="#dedede"/><path d="M321.7 278.78V275.48L324.25 276.08L325.35 278.78Z" fill="#dedede"/><path d="M326.65 278.78V275.48L329.2 276.08L330.3 278.78Z" fill="#dedede"/>
<rect x="343" y="274.08" width="4.8" height="5.4" fill="#111" stroke="none" stroke-width="0" /><path d="M343.9 278.78V275.28L346.3 276.08L346.9 278.78Z" fill="#e2e2e2"/>
<rect x="363.6" y="274.08" width="4.9" height="5.4" fill="#111" stroke="none" stroke-width="0" /><path d="M364.5 278.78V275.28L367 276.08L367.6 278.78Z" fill="#e2e2e2"/>
<rect x="451.2" y="274.08" width="4.8" height="5.4" fill="#111" stroke="none" stroke-width="0" /><path d="M452.1 278.78V275.28L454.5 276.08L455.1 278.78Z" fill="#e2e2e2"/>
<rect x="469.8" y="274.08" width="4.8" height="5.4" fill="#111" stroke="none" stroke-width="0" /><path d="M470.7 278.78V275.28L473.1 276.08L473.7 278.78Z" fill="#e2e2e2"/>
<rect x="388" y="274.28" width="6.8" height="13.3" fill="#111" stroke="none" stroke-width="0" rx="0.8"/><path d="M389.3 286.88V278.48Q389.6 276.88 393.2 277.68V286.88Z" fill="url(#doorg)"/>
<rect x="385" y="287.58" width="12" height="2.2" rx="0.6" fill="#5f6f63" fill-opacity="0.7"/>
<rect x="402.2" y="274.08" width="11" height="3" fill="#111" stroke="none" stroke-width="0" rx="0.5"/><rect x="403.2" y="274.88" width="8" height="1.5" fill="url(#hwing)"/>
<rect x="402" y="287.28" width="11.2" height="2.6" rx="0.7" fill="#8a8a8a" stroke="#555" stroke-width="0.5"/>
<rect x="420.6" y="274.28" width="7.6" height="13.3" fill="#111" stroke="none" stroke-width="0" rx="0.8"/><path d="M421.9 286.88V278.48Q422.2 276.88 426.6 277.68V286.88Z" fill="url(#doorg)"/>
<rect x="418.8" y="287.58" width="12.2" height="2.2" rx="0.6" fill="#6a6a6a" fill-opacity="0.75"/>
<rect x="311" y="293.95" width="19.8" height="5.4" fill="#111" stroke="none" stroke-width="0" /><path d="M311.8 298.65V295.35L314.35 295.95L315.45 298.65Z" fill="#dedede"/><path d="M316.75 298.65V295.35L319.3 295.95L320.4 298.65Z" fill="#dedede"/><path d="M321.7 298.65V295.35L324.25 295.95L325.35 298.65Z" fill="#dedede"/><path d="M326.65 298.65V295.35L329.2 295.95L330.3 298.65Z" fill="#dedede"/>
<rect x="343" y="293.95" width="4.8" height="5.4" fill="#111" stroke="none" stroke-width="0" /><path d="M343.9 298.65V295.15L346.3 295.95L346.9 298.65Z" fill="#e2e2e2"/>
<rect x="363.6" y="293.95" width="4.9" height="5.4" fill="#111" stroke="none" stroke-width="0" /><path d="M364.5 298.65V295.15L367 295.95L367.6 298.65Z" fill="#e2e2e2"/>
<rect x="451.2" y="293.95" width="4.8" height="5.4" fill="#111" stroke="none" stroke-width="0" /><path d="M452.1 298.65V295.15L454.5 295.95L455.1 298.65Z" fill="#e2e2e2"/>
<rect x="469.8" y="293.95" width="4.8" height="5.4" fill="#111" stroke="none" stroke-width="0" /><path d="M470.7 298.65V295.15L473.1 295.95L473.7 298.65Z" fill="#e2e2e2"/>
<rect x="388" y="294.15" width="6.8" height="13.3" fill="#111" stroke="none" stroke-width="0" rx="0.8"/><path d="M389.3 306.75V298.35Q389.6 296.75 393.2 297.55V306.75Z" fill="url(#doorg)"/>
<rect x="385" y="307.45" width="12" height="2.2" rx="0.6" fill="#5f6f63" fill-opacity="0.7"/>
<rect x="402.2" y="293.95" width="11" height="3" fill="#111" stroke="none" stroke-width="0" rx="0.5"/><rect x="403.2" y="294.75" width="8" height="1.5" fill="url(#hwing)"/>
<rect x="402" y="307.15" width="11.2" height="2.6" rx="0.7" fill="#8a8a8a" stroke="#555" stroke-width="0.5"/>
<rect x="420.6" y="294.15" width="7.6" height="13.3" fill="#111" stroke="none" stroke-width="0" rx="0.8"/><path d="M421.9 306.75V298.35Q422.2 296.75 426.6 297.55V306.75Z" fill="url(#doorg)"/>
<rect x="418.8" y="307.45" width="12.2" height="2.2" rx="0.6" fill="#6a6a6a" fill-opacity="0.75"/>
<rect x="311" y="313.82" width="19.8" height="5.4" fill="#111" stroke="none" stroke-width="0" /><path d="M311.8 318.52V315.22L314.35 315.82L315.45 318.52Z" fill="#dedede"/><path d="M316.75 318.52V315.22L319.3 315.82L320.4 318.52Z" fill="#dedede"/><path d="M321.7 318.52V315.22L324.25 315.82L325.35 318.52Z" fill="#dedede"/><path d="M326.65 318.52V315.22L329.2 315.82L330.3 318.52Z" fill="#dedede"/>
<rect x="343" y="313.82" width="4.8" height="5.4" fill="#111" stroke="none" stroke-width="0" /><path d="M343.9 318.52V315.02L346.3 315.82L346.9 318.52Z" fill="#e2e2e2"/>
<rect x="363.6" y="313.82" width="4.9" height="5.4" fill="#111" stroke="none" stroke-width="0" /><path d="M364.5 318.52V315.02L367 315.82L367.6 318.52Z" fill="#e2e2e2"/>
<rect x="451.2" y="313.82" width="4.8" height="5.4" fill="#111" stroke="none" stroke-width="0" /><path d="M452.1 318.52V315.02L454.5 315.82L455.1 318.52Z" fill="#e2e2e2"/>
<rect x="469.8" y="313.82" width="4.8" height="5.4" fill="#111" stroke="none" stroke-width="0" /><path d="M470.7 318.52V315.02L473.1 315.82L473.7 318.52Z" fill="#e2e2e2"/>
<rect x="388" y="314.02" width="6.8" height="13.3" fill="#111" stroke="none" stroke-width="0" rx="0.8"/><path d="M389.3 326.62V318.22Q389.6 316.62 393.2 317.42V326.62Z" fill="url(#doorg)"/>
<rect x="385" y="327.32" width="12" height="2.2" rx="0.6" fill="#5f6f63" fill-opacity="0.7"/>
<rect x="402.2" y="313.82" width="11" height="3" fill="#111" stroke="none" stroke-width="0" rx="0.5"/><rect x="403.2" y="314.62" width="8" height="1.5" fill="url(#hwing)"/>
<rect x="402" y="327.02" width="11.2" height="2.6" rx="0.7" fill="#8a8a8a" stroke="#555" stroke-width="0.5"/>
<rect x="420.6" y="314.02" width="7.6" height="13.3" fill="#111" stroke="none" stroke-width="0" rx="0.8"/><path d="M421.9 326.62V318.22Q422.2 316.62 426.6 317.42V326.62Z" fill="url(#doorg)"/>
<rect x="418.8" y="327.32" width="12.2" height="2.2" rx="0.6" fill="#6a6a6a" fill-opacity="0.75"/>
<rect x="311" y="333.69" width="19.8" height="5.4" fill="#111" stroke="none" stroke-width="0" /><path d="M311.8 338.39V335.09L314.35 335.69L315.45 338.39Z" fill="#dedede"/><path d="M316.75 338.39V335.09L319.3 335.69L320.4 338.39Z" fill="#dedede"/><path d="M321.7 338.39V335.09L324.25 335.69L325.35 338.39Z" fill="#dedede"/><path d="M326.65 338.39V335.09L329.2 335.69L330.3 338.39Z" fill="#dedede"/>
<rect x="343" y="333.69" width="4.8" height="5.4" fill="#111" stroke="none" stroke-width="0" /><path d="M343.9 338.39V334.89L346.3 335.69L346.9 338.39Z" fill="#e2e2e2"/>
<rect x="363.6" y="333.69" width="4.9" height="5.4" fill="#111" stroke="none" stroke-width="0" /><path d="M364.5 338.39V334.89L367 335.69L367.6 338.39Z" fill="#e2e2e2"/>
<rect x="451.2" y="333.69" width="4.8" height="5.4" fill="#111" stroke="none" stroke-width="0" /><path d="M452.1 338.39V334.89L454.5 335.69L455.1 338.39Z" fill="#e2e2e2"/>
<rect x="469.8" y="333.69" width="4.8" height="5.4" fill="#111" stroke="none" stroke-width="0" /><path d="M470.7 338.39V334.89L473.1 335.69L473.7 338.39Z" fill="#e2e2e2"/>
<rect x="388" y="333.89" width="6.8" height="13.3" fill="#111" stroke="none" stroke-width="0" rx="0.8"/><path d="M389.3 346.49V338.09Q389.6 336.49 393.2 337.29V346.49Z" fill="url(#doorg)"/>
<rect x="385" y="347.19" width="12" height="2.2" rx="0.6" fill="#5f6f63" fill-opacity="0.7"/>
<rect x="402.2" y="333.69" width="11" height="3" fill="#111" stroke="none" stroke-width="0" rx="0.5"/><rect x="403.2" y="334.49" width="8" height="1.5" fill="url(#hwing)"/>
<rect x="402" y="346.89" width="11.2" height="2.6" rx="0.7" fill="#8a8a8a" stroke="#555" stroke-width="0.5"/>
<rect x="420.6" y="333.89" width="7.6" height="13.3" fill="#111" stroke="none" stroke-width="0" rx="0.8"/><path d="M421.9 346.49V338.09Q422.2 336.49 426.6 337.29V346.49Z" fill="url(#doorg)"/>
<rect x="418.8" y="347.19" width="12.2" height="2.2" rx="0.6" fill="#6a6a6a" fill-opacity="0.75"/>
<rect x="311" y="353.56" width="19.8" height="5.4" fill="#111" stroke="none" stroke-width="0" /><path d="M311.8 358.26V354.96L314.35 355.56L315.45 358.26Z" fill="#dedede"/><path d="M316.75 358.26V354.96L319.3 355.56L320.4 358.26Z" fill="#dedede"/><path d="M321.7 358.26V354.96L324.25 355.56L325.35 358.26Z" fill="#dedede"/><path d="M326.65 358.26V354.96L329.2 355.56L330.3 358.26Z" fill="#dedede"/>
<rect x="343" y="353.56" width="4.8" height="5.4" fill="#111" stroke="none" stroke-width="0" /><path d="M343.9 358.26V354.76L346.3 355.56L346.9 358.26Z" fill="#e2e2e2"/>
<rect x="363.6" y="353.56" width="4.9" height="5.4" fill="#111" stroke="none" stroke-width="0" /><path d="M364.5 358.26V354.76L367 355.56L367.6 358.26Z" fill="#e2e2e2"/>
<rect x="451.2" y="353.56" width="4.8" height="5.4" fill="#111" stroke="none" stroke-width="0" /><path d="M452.1 358.26V354.76L454.5 355.56L455.1 358.26Z" fill="#e2e2e2"/>
<rect x="469.8" y="353.56" width="4.8" height="5.4" fill="#111" stroke="none" stroke-width="0" /><path d="M470.7 358.26V354.76L473.1 355.56L473.7 358.26Z" fill="#e2e2e2"/>
<rect x="388" y="353.76" width="6.8" height="13.3" fill="#111" stroke="none" stroke-width="0" rx="0.8"/><path d="M389.3 366.36V357.96Q389.6 356.36 393.2 357.16V366.36Z" fill="url(#doorg)"/>
<rect x="385" y="367.06" width="12" height="2.2" rx="0.6" fill="#5f6f63" fill-opacity="0.7"/>
<rect x="402.2" y="353.56" width="11" height="3" fill="#111" stroke="none" stroke-width="0" rx="0.5"/><rect x="403.2" y="354.36" width="8" height="1.5" fill="url(#hwing)"/>
<rect x="402" y="366.76" width="11.2" height="2.6" rx="0.7" fill="#8a8a8a" stroke="#555" stroke-width="0.5"/>
<rect x="420.6" y="353.76" width="7.6" height="13.3" fill="#111" stroke="none" stroke-width="0" rx="0.8"/><path d="M421.9 366.36V357.96Q422.2 356.36 426.6 357.16V366.36Z" fill="url(#doorg)"/>
<rect x="418.8" y="367.06" width="12.2" height="2.2" rx="0.6" fill="#6a6a6a" fill-opacity="0.75"/>
<rect x="311" y="373.43" width="19.8" height="5.4" fill="#111" stroke="none" stroke-width="0" /><path d="M311.8 378.13V374.83L314.35 375.43L315.45 378.13Z" fill="#dedede"/><path d="M316.75 378.13V374.83L319.3 375.43L320.4 378.13Z" fill="#dedede"/><path d="M321.7 378.13V374.83L324.25 375.43L325.35 378.13Z" fill="#dedede"/><path d="M326.65 378.13V374.83L329.2 375.43L330.3 378.13Z" fill="#dedede"/>
<rect x="343" y="373.43" width="4.8" height="5.4" fill="#111" stroke="none" stroke-width="0" /><path d="M343.9 378.13V374.63L346.3 375.43L346.9 378.13Z" fill="#e2e2e2"/>
<rect x="363.6" y="373.43" width="4.9" height="5.4" fill="#111" stroke="none" stroke-width="0" /><path d="M364.5 378.13V374.63L367 375.43L367.6 378.13Z" fill="#e2e2e2"/>
<rect x="451.2" y="373.43" width="4.8" height="5.4" fill="#111" stroke="none" stroke-width="0" /><path d="M452.1 378.13V374.63L454.5 375.43L455.1 378.13Z" fill="#e2e2e2"/>
<rect x="469.8" y="373.43" width="4.8" height="5.4" fill="#111" stroke="none" stroke-width="0" /><path d="M470.7 378.13V374.63L473.1 375.43L473.7 378.13Z" fill="#e2e2e2"/>
<rect x="388" y="373.43" width="5" height="5.4" fill="#111" stroke="none" stroke-width="0" /><path d="M388.9 378.13V374.63L391.5 375.43L392.1 378.13Z" fill="#e2e2e2"/>
<rect x="398.6" y="373.2" width="18" height="18" fill="#1a1a1a" stroke="#8a6a2a" stroke-width="1"/>
<path d="M400 391V381Q404 378 407.3 382.5V391ZM407.9 391V382.5Q411 378 415.2 381V391Z" fill="#e8e8e8"/>
<path d="M407.6 373.5V391M402 391L404 383M413.5 391L411.5 383" stroke="#333" stroke-width="0.6" fill="none"/>
<path d="M312.6 391.4Q312.6 389.1 314.7 389.1Q316.8 389.1 316.8 391.4Z" fill="#111"/>
<path d="M331.8 391.4Q331.8 389.1 333.9 389.1Q336 389.1 336 391.4Z" fill="#111"/>
<path d="M377.4 391.4Q377.4 389.1 379.5 389.1Q381.6 389.1 381.6 391.4Z" fill="#111"/>
<path d="M428 391.4Q428 389.1 430.1 389.1Q432.2 389.1 432.2 391.4Z" fill="#111"/>
<path d="M456 391.4Q456 389.1 458.1 389.1Q460.2 389.1 460.2 391.4Z" fill="#111"/>
<path d="M476 391.4Q476 389.1 478.1 389.1Q480.2 389.1 480.2 391.4Z" fill="#111"/>
</svg>
<svg style="left:0;top:0" width="1000" height="560" viewBox="0 0 1000 560" stroke-linecap="butt" stroke-linejoin="miter">
<path d="M4.5 1.3H11.8V8.2Q11.8 11.3 8.6 11.3H2.2V3.6Q2.2 1.3 4.5 1.3Z" fill="#8ccf4b"/><path d="M4 3.8L4.9 3L10.3 8.6L9.6 9.6Z" fill="#fff"/><rect x="925.3" y="2.6" width="7.4" height="7.4" fill="#ececec" stroke="#8a8a8a" stroke-width="0.6"/><circle cx="928.8" cy="5.4" r="1.3" fill="#222"/><path d="M926.3 9.6Q926.3 7 928.8 7Q931.3 7 931.3 9.6Z" fill="#222"/><circle cx="932" cy="3.6" r="1.4" fill="#fff" stroke="#4bb050" stroke-width="0.6"/><path d="M946.3 8.4H953.2" stroke="#111" stroke-width="1.3"/><path d="M968.8 4.2V2.6H973.4V7.4H971.8" stroke="#111" stroke-width="0.9" fill="none"/><rect x="966.8" y="4.4" width="5" height="5" rx="0.8" fill="#fff" stroke="#111" stroke-width="0.9"/><path d="M985 3.2L991.6 9.6M991.6 3.2L985 9.6" stroke="#111" stroke-width="1.2"/>
<path d="M4.6 33.2L7.2 30.8H11.2V39.8H4.6Z" stroke="#222" stroke-width="0.9" fill="#fff" /><rect x="10.2" y="30" width="4.2" height="4.2" fill="#2db34a" stroke="#1a7a30" stroke-width="0.5"/><rect x="11.5" y="31.3" width="1.6" height="1.6" fill="#d8ffd8"/><path d="M21.6 39.8V31.2H25.4L26.4 32.4H31V34" stroke="#222" stroke-width="1.0" fill="#222" /><path d="M21.6 39.8L23.6 34.2H32.4L30.4 39.8Z" stroke="#222" stroke-width="0.9" fill="#fff" /><path d="M36.3 34.8H40.7L38.5 37.2Z" fill="#555"/><rect x="49.4" y="31.2" width="9.4" height="8.8" rx="0.8" fill="#b4b4b4"/><rect x="52" y="31.2" width="4.4" height="3" fill="#e4e4e4"/><rect x="52.6" y="36" width="3" height="2.4" fill="#e4e4e4"/><path d="M68.4 35.2V30.8H72.6L73.6 32V35.2" stroke="#222" stroke-width="0.9" fill="#fff" /><path d="M66.2 35.4H75.6V39.8H66.2Z" stroke="#222" stroke-width="1.0" fill="#fff" /><path d="M67 38H75" stroke="#222" stroke-width="0.8" fill="none" /><path d="M87.6 31.2H92.2V36.4H87.6Z" stroke="#b8b8b8" stroke-width="0.9" fill="none" /><path d="M93.4 37H96.6V40H93.4Z" stroke="#c4c4c4" stroke-width="0.8" fill="none" /><path d="M104.8 31H109.8V36H104.8Z" stroke="#b8b8b8" stroke-width="0.9" fill="#eee" /><path d="M108.6 34H114.6V40H108.6Z" stroke="#b8b8b8" stroke-width="0.9" fill="#eee" /><path d="M110 36H113.4M110 38H113.4" stroke="#c0c0c0" stroke-width="0.6" fill="none" /><rect x="121.6" y="31" width="6.4" height="8" fill="#2a2a2a"/><rect x="123" y="30.2" width="3.6" height="1.6" fill="#2a2a2a"/><path d="M126.6 34H131.8V40.2H126.6Z" stroke="#222" stroke-width="0.8" fill="#fff" /><path d="M127.8 35.8H130.8M127.8 37.2H130.8M127.8 38.6H130.8" stroke="#444" stroke-width="0.6" fill="none" /><path d="M147.4 32.4A4.2 4.2 0 1 1 145.6 40" stroke="#a4a4a4" stroke-width="1.0" fill="none" /><path d="M145.6 40A4.2 4.2 0 0 1 143.6 35.4" stroke="#b4b4b4" stroke-width="0.9" fill="none" stroke-dasharray="1 1.1"/><path d="M144.8 32.6L148.4 30.2V34.6Z" fill="#a4a4a4"/><path d="M157.4 34.85H161.6L159.5 37.15Z" fill="#b4b4b4"/><path d="M174.6 32.4A4.2 4.2 0 1 0 176.4 40" stroke="#a4a4a4" stroke-width="1.0" fill="none" /><path d="M176.4 40A4.2 4.2 0 0 0 178.4 35.4" stroke="#b4b4b4" stroke-width="0.9" fill="none" stroke-dasharray="1 1.1"/><path d="M177.2 32.6L173.6 30.2V34.6Z" fill="#a4a4a4"/><path d="M185.20000000000002 34.85H189.4L187.3 37.15Z" fill="#b4b4b4"/><path d="M201.6 30.6H211.4V40.6H201.6Z" stroke="#222" stroke-width="0.9" fill="#fff" /><path d="M206.5 32.2V38" stroke="#222" stroke-width="1.2" fill="none" /><path d="M204.2 36H208.8L206.5 38.8Z" fill="#222"/><path d="M218.6 30.6H228.4V40.6H218.6Z" stroke="#222" stroke-width="0.9" fill="#fff" /><path d="M223.5 33.6V39" stroke="#222" stroke-width="1.2" fill="none" /><path d="M221.2 35.2H225.8L223.5 32.4Z" fill="#222"/><rect x="236" y="37" width="3.4" height="3.6" fill="#333"/><rect x="236.8" y="37" width="1.6" height="1.2" fill="#eee"/><path d="M302.09999999999997 34.85H306.3L304.2 37.15Z" fill="#555"/><rect x="317" y="32.6" width="7" height="6.4" fill="#333"/><path d="M315 33.4V31.2H317.4M323.4 31.2H325.8V33.4M325.8 38.2V40.4H323.4M317.4 40.4H315V38.2" stroke="#222" stroke-width="0.9" fill="none" /><path d="M337.6 31V40.2H347" stroke="#8a8a8a" stroke-width="1.6" fill="none" /><path d="M336.4 30.6V41.4H347.2" stroke="#222" stroke-width="0.7" fill="none" /><path d="M338.4 33H337M338.4 35H337M338.4 37H337M340.6 39.4V40.8M342.6 39.4V40.8M344.6 39.4V40.8" stroke="#ddd" stroke-width="0.5" fill="none" /><ellipse cx="344.6" cy="32.4" rx="2.2" ry="1.3" fill="#fff" stroke="#333" stroke-width="0.6"/><circle cx="344.6" cy="32.4" r="0.6" fill="#222"/><path d="M353.4 33V40.8M355.3 33V40.8M357.2 33V40.8M359.1 33V40.8M361.0 33V40.8M362.9 33V40.8M353 33.40H363.4M353 35.25H363.4M353 37.10H363.4M353 38.95H363.4M353 40.80H363.4" stroke="#333" stroke-width="0.7" fill="none" /><ellipse cx="360.6" cy="31.6" rx="2" ry="1.2" fill="#fff" stroke="#333" stroke-width="0.6"/><circle cx="360.6" cy="31.6" r="0.6" fill="#222"/><path d="M373.2 30.6V41.2M370 38H381" stroke="#999" stroke-width="0.6" fill="none" stroke-dasharray="1 0.7"/><ellipse cx="378.4" cy="32.2" rx="2" ry="1.2" fill="#fff" stroke="#333" stroke-width="0.6"/><circle cx="378.4" cy="32.2" r="0.6" fill="#222"/><path d="M392.6 31.4H401V40.4H392.6Z" stroke="#333" stroke-width="0.8" fill="#f8f8f8" /><path d="M394.4 36.4L398.8 34V38.8Z" fill="#222"/><rect x="398.6" y="37.4" width="2" height="2" fill="#222"/><path d="M399.4 29.6L402.6 32.8M402.6 29.6L399.4 32.8" stroke="#e02020" stroke-width="0.9" fill="none" /><path d="M458.9 35.050000000000004H463.1L461 37.35Z" fill="#555"/><circle cx="479.6" cy="35.6" r="3.04" fill="none" stroke="#222" stroke-width="1.38"/><path d="M482.66 36.87L484.27 37.54M480.87 38.66L481.54 40.27M478.33 38.66L477.66 40.27M476.54 36.87L474.93 37.54M476.54 34.33L474.93 33.66M478.33 32.54L477.66 30.93M480.87 32.54L481.54 30.93M482.66 34.33L484.27 33.66" stroke="#222" stroke-width="1.84" fill="none"/><path d="M486.6 41.6V39.800000000000004L484.8 41.6Z" fill="#444"/><path d="M494.4 31H504.2V40.8H494.4Z" stroke="#222" stroke-width="0.9" fill="#fff" /><path d="M494.4 32.8H504.2" stroke="#222" stroke-width="0.9" fill="none" /><path d="M496.4 34.6H499.4V36.4H496.4" stroke="#444" stroke-width="0.6" fill="none" /><path d="M542.9 35.050000000000004H547.1L545 37.35Z" fill="#555"/>
<path d="M98.3 57.4H102.7L100.5 59.800000000000004Z" fill="#555"/><path d="M113.6 53.6H120.8V58H113.6Z" stroke="#444" stroke-width="0.7" fill="#fff" /><path d="M113.6 50.4V52.4M120.8 50.4V52.4M113.6 51.4H120.8" stroke="#444" stroke-width="0.6" fill="none" /><path d="M116.4 60.4H120.8V67.4H116.4Z" stroke="#444" stroke-width="0.7" fill="#fff" /><path d="M113.2 60.4H115.2M113.2 67.4H115.2M114.2 60.4V67.4" stroke="#444" stroke-width="0.6" fill="none" /><path d="M171.89999999999998 53.55H174.5L173.2 55.05Z" fill="#666"/><path d="M179.5 55.05H182.10000000000002L180.8 53.55Z" fill="#666"/><path d="M171.89999999999998 62.95H174.5L173.2 64.45Z" fill="#666"/><path d="M179.5 64.45H182.10000000000002L180.8 62.95Z" fill="#666"/><path d="M509.7 53.55H512.3L511 55.05Z" fill="#666"/><path d="M517.5 55.05H520.0999999999999L518.8 53.55Z" fill="#666"/><path d="M509.7 62.95H512.3L511 64.45Z" fill="#666"/><path d="M517.5 64.45H520.0999999999999L518.8 62.95Z" fill="#666"/><path d="M436.9 56.15H439.5L438.2 54.65Z" fill="#666"/><path d="M436.9 61.25H439.5L438.2 62.75Z" fill="#666"/><path d="M196.8 52.8H203.8V63.4H196.8Z" stroke="#333" stroke-width="0.8" fill="#fff" /><path d="M212.6 56.8H222.8V63.4H212.6Z" stroke="#333" stroke-width="0.8" fill="#fff" /><path d="M237.4 53.2H242V58.6H237.4Z" stroke="#333" stroke-width="0.7" fill="#fff" /><path d="M240 55.6H244.6V61H240Z" stroke="#333" stroke-width="0.7" fill="#fff" /><path d="M242.8 58H247.4V63.4H242.8Z" stroke="#333" stroke-width="0.7" fill="#fff" /><path d="M254.6 52.8H256.8V63.4H254.6Z" stroke="#333" stroke-width="0.7" fill="#ddd" /><path d="M258.6 60H260.4V63.4H258.6ZM262.4 58.6H264.4V63.4H262.4Z" stroke="#333" stroke-width="0.7" fill="#ddd" /><path d="M363.3 57.599999999999994H367.7L365.5 60.0Z" fill="#555"/><path d="M384.6 53.8L386.8 56.4H382.40000000000003ZM384.6 63.8L386.8 61.199999999999996H382.40000000000003ZM379.6 58.8L382.20000000000005 56.599999999999994V61.0ZM389.6 58.8L387.0 56.599999999999994V61.0Z" fill="#222"/><rect x="383.0" y="57.199999999999996" width="3.2" height="3.2" fill="#fff" stroke="#222" stroke-width="0.6"/><path d="M451.4 51.699999999999996H454.4V54.9H451.4Z" stroke="#555" stroke-width="0.6" fill="#fff" /><path d="M453 53.3H456V56.5H453Z" stroke="#555" stroke-width="0.6" fill="#fff" /><text x="456.6" y="57.099999999999994" font-size="4.4" fill="#333" font-family="Liberation Sans, sans-serif">x</text><path d="M451.4 61.1H454.4V64.3H451.4Z" stroke="#555" stroke-width="0.6" fill="#fff" /><path d="M453 62.7H456V65.9H453Z" stroke="#555" stroke-width="0.6" fill="#fff" /><text x="456.6" y="66.5" font-size="4.4" fill="#333" font-family="Liberation Sans, sans-serif">y</text><path d="M532.4 54.2H540.6V62.4H532.4Z" stroke="#222" stroke-width="0.8" fill="none" stroke-dasharray="1.6 1"/><rect x="531.6" y="53.400000000000006" width="1.6" height="1.6" fill="#222"/><rect x="539.8000000000001" y="53.400000000000006" width="1.6" height="1.6" fill="#222"/><rect x="531.6" y="61.6" width="1.6" height="1.6" fill="#222"/><rect x="539.8000000000001" y="61.6" width="1.6" height="1.6" fill="#222"/><path d="M540 61L542.6 64.2L541.4 64.4L540.2 63.4Z" fill="#222"/><path d="M557.2 58.6H564M560.6 55.2V62" stroke="#9a9a9a" stroke-width="0.9" fill="none" />
<path d="M20.6 79.2L25.2 74.6L29.8 79.2H28.6V83.6H26.4V80.6H24V83.6H21.8V79.2Z" fill="#2a2a2a"/><path d="M113.6 78.6H120.2M116.9 75.3V81.9" stroke="#9a9a9a" stroke-width="0.9" fill="none" /><path d="M21.2 88.6L24.6 92M21.2 88.6H23.6M21.2 88.6V91" stroke="#888" stroke-width="0.6" fill="none" />
<path d="M7.6 77.2V86.4L9.8 84.4L11.2 87.6L12.4 87L11 83.9H13.8Z" fill="#222"/><path d="M15.6 88.8V86.2L13.0 88.8Z" fill="#444"/><path d="M7.2 94.4Q5.4 97.6 7 100.6Q8 102.6 9.8 103.2" stroke="#333" stroke-width="0.8" fill="none" /><circle cx="6.6" cy="97.2" r="1.1" fill="#f0f0f0" stroke="#333" stroke-width="0.6"/><path d="M10 100.2L14.4 102.6L12.4 103L13.4 104.6L12.6 105L11.6 103.4L10.4 104.6Z" fill="#222"/><path d="M15.6 105.4V102.80000000000001L13.0 105.4Z" fill="#444"/><path d="M7.4 115V123.4H15M4.6 118H12.4V126" stroke="#222" stroke-width="1.2" fill="none" /><path d="M15.8 126.6V124.0L13.200000000000001 126.6Z" fill="#444"/><circle cx="8.6" cy="136.6" r="3.9" fill="none" stroke="#333" stroke-width="0.9"/><path d="M11.4 139.6L14.6 143" stroke="#222" stroke-width="1.4" fill="none" /><path d="M15.8 144V141.4L13.200000000000001 144Z" fill="#444"/><path d="M4.4 155.6H8.6M6.5 153.4V157.8" stroke="#333" stroke-width="0.8" fill="none" /><path d="M6.8 160V163.2M8.4 162.6Q9.6 160.4 10.6 162.2T12.8 162T14.4 162.6" stroke="#222" stroke-width="0.9" fill="none" /><path d="M15.8 164.6V162.0L13.200000000000001 164.6Z" fill="#444"/><path d="M4.4 172.6Q6.4 169.4 8.2 171.6Q9.4 173.2 8.6 175.8Q8 178.8 10.4 179.6Q13 180 13.6 177.4Q13.8 175.4 12 175" stroke="#222" stroke-width="1.1" fill="none" /><path d="M15.8 182V179.4L13.200000000000001 182Z" fill="#444"/><path d="M4.6 188.4H14.4V197.6H4.6Z" stroke="#333" stroke-width="0.9" fill="none" /><path d="M15.8 199V196.4L13.200000000000001 199Z" fill="#444"/><ellipse cx="9.4" cy="210" rx="5" ry="4.8" fill="none" stroke="#333" stroke-width="0.9"/><path d="M15.8 216V213.4L13.200000000000001 216Z" fill="#444"/><path d="M6.8 222.4H12.2L14.8 227.2L12.2 232H6.8L4.2 227.2Z" stroke="#333" stroke-width="0.9" fill="none" /><path d="M15.8 233.4V230.8L13.200000000000001 233.4Z" fill="#444"/><path d="M5.4 273.4L13.4 265.4M4.4 272.2L6.6 274.6M12.2 264.2L14.6 266.6" stroke="#222" stroke-width="0.9" fill="none" /><path d="M15.8 276.2V273.59999999999997L13.200000000000001 276.2Z" fill="#444"/><path d="M5.8 283.4L12.8 290.4" stroke="#222" stroke-width="1.1" fill="none" /><rect x="4.2" y="281.8" width="3.2" height="3.2" fill="#e8791e" stroke="#8a4a10" stroke-width="0.5"/><rect x="11.2" y="288.8" width="3.2" height="3.2" fill="#e8791e" stroke="#8a4a10" stroke-width="0.5"/><path d="M15.8 293.4V290.79999999999995L13.200000000000001 293.4Z" fill="#444"/><rect x="6.2" y="305" width="8.6" height="8.6" fill="#444"/><rect x="4.4" y="303.2" width="8.4" height="8.4" fill="#ececec" stroke="#333" stroke-width="0.8"/><path d="M15.8 315V312.4L13.200000000000001 315Z" fill="#444"/><rect x="4.6" y="320.2" width="10.4" height="10" fill="#fff" stroke="#222" stroke-width="0.8"/><rect x="4.60" y="320.20" width="2.08" height="2" fill="#222"/><rect x="8.76" y="320.20" width="2.08" height="2" fill="#222"/><rect x="12.92" y="320.20" width="2.08" height="2" fill="#222"/><rect x="6.68" y="322.20" width="2.08" height="2" fill="#222"/><rect x="10.84" y="322.20" width="2.08" height="2" fill="#222"/><rect x="4.60" y="324.20" width="2.08" height="2" fill="#222"/><rect x="8.76" y="324.20" width="2.08" height="2" fill="#222"/><rect x="12.92" y="324.20" width="2.08" height="2" fill="#222"/><rect x="6.68" y="326.20" width="2.08" height="2" fill="#222"/><rect x="10.84" y="326.20" width="2.08" height="2" fill="#222"/><rect x="4.60" y="328.20" width="2.08" height="2" fill="#222"/><rect x="8.76" y="328.20" width="2.08" height="2" fill="#222"/><rect x="12.92" y="328.20" width="2.08" height="2" fill="#222"/><path d="M4.8 351.2L10.6 345.2" stroke="#333" stroke-width="1.8" fill="none" /><path d="M4.6 351.4L6.4 349.6" stroke="#d86a1e" stroke-width="1.8" fill="none" /><path d="M10 343.8L12.2 341.4Q13.6 340.6 14.2 342Q14.6 343.2 13.4 344L11.6 345.8Z" fill="#222"/><path d="M15.8 353V350.4L13.200000000000001 353Z" fill="#444"/><path d="M9.4 358.6L14 363L9.4 367.6L4.8 363Z" stroke="#222" stroke-width="1.0" fill="#fff" /><path d="M9.4 358.6L14 363" stroke="#111" stroke-width="1.6" fill="none" /><path d="M7 363.4H11.6L9.4 365.8Z" fill="#e02020"/><path d="M13.6 364.6Q15.4 367.4 14.4 368.6Q13.2 369.4 12.4 368Q12.2 366.6 13.6 364.6Z" fill="#e02020"/><path d="M15.8 370.4V367.79999999999995L13.200000000000001 370.4Z" fill="#444"/><path d="M5.8 387H12.8M9.3 383.4V390.6" stroke="#9a9a9a" stroke-width="1.0" fill="none" />
<path d="M30.2 492.6L31.8 491H36.2V498.2H30.2Z" stroke="#555" stroke-width="0.6" fill="#fff" /><path d="M33.2 493.4V496.8M31.599999999999998 495.1H34.8" stroke="#555" stroke-width="0.6" fill="none" /><path d="M110.6 492.6L112.19999999999999 491H116.6V498.2H110.6Z" stroke="#555" stroke-width="0.6" fill="#fff" /><path d="M113.6 493.4V496.8M112.0 495.1H115.19999999999999" stroke="#555" stroke-width="0.6" fill="none" /><path d="M39.6 491.4V498M46 491.4V498L40.6 494.7Z" fill="#b0b0b0" stroke="#b0b0b0" stroke-width="0.7"/><path d="M55.4 491.4V498L50.2 494.7Z" fill="#b0b0b0"/><path d="M91.2 491.2V498.2L96.6 494.7Z" fill="#222"/><path d="M100.4 491.2V498.2L105.6 494.7Z" fill="#222"/><path d="M106.8 491.2V498.2" stroke="#222" stroke-width="1"/><path d="M276.2 490.2H310.4L307.8 499.2H278.79999999999995Z" fill="#d4d4d4" stroke="#9a9a9a" stroke-width="0.6"/><path d="M245.60000000000002 490.2H276.0L278.79999999999995 499.2H248.20000000000002Z" fill="#d4d4d4" stroke="#9a9a9a" stroke-width="0.6"/><path d="M215.3 490.2H245.4L248.20000000000002 499.2H217.9Z" fill="#d4d4d4" stroke="#9a9a9a" stroke-width="0.6"/><path d="M185.10000000000002 490.2H215.1L217.9 499.2H187.70000000000002Z" fill="#d4d4d4" stroke="#9a9a9a" stroke-width="0.6"/><path d="M155.0 490.2H184.9L187.70000000000002 499.2H157.6Z" fill="#d4d4d4" stroke="#9a9a9a" stroke-width="0.6"/><path d="M28 489.6H123.6L127 499.2H154L157.4 489.6" fill="none" stroke="#9a9a9a" stroke-width="0.7"/><path d="M123.6 489.2L127 499.2H154L157.4 489.2Z" fill="#fff"/><path d="M123.6 489.6L127 499.2H154L157.4 489.6" fill="none" stroke="#8a8a8a" stroke-width="0.7"/><path d="M157 489.8H403.6" stroke="#a8a8a8" stroke-width="0.7"/><path d="M399.6 491.4V498M401 491.4V498" stroke="#cfcfcf" stroke-width="0.6" stroke-dasharray="0.7 0.7"/><path d="M410.4 492.4L407.8 494.7L410.4 497" stroke="#222" stroke-width="1.1" fill="none" /><path d="M761 492.4L763.6 494.7L761 497" stroke="#222" stroke-width="1.1" fill="none" /><path d="M770.8 102.4L773.1 100L775.4 102.4" stroke="#333" stroke-width="1.0" fill="none" /><path d="M770.8 482L773.1 484.4L775.4 482" stroke="#333" stroke-width="1.0" fill="none" /><circle cx="772.2" cy="493.6" r="2.6" fill="#fff" stroke="#555" stroke-width="0.7"/><path d="M770.8 493.6H773.6M772.2 492.2V495M774.2 495.6L776.8 498.2" stroke="#444" stroke-width="0.8" fill="none" /><path d="M20.6 502V510M22.2 502V510" stroke="#cfcfcf" stroke-width="0.6" stroke-dasharray="0.7 0.7"/><path d="M27.4 503.4V508.6L30.2 506Z" fill="#555"/><path d="M36.8 510L41.6 505" stroke="#444" stroke-width="1.6" fill="none" /><path d="M36.6 510.2L38.2 508.6" stroke="#d86a1e" stroke-width="1.6" fill="none" /><path d="M41 503.8L42.8 501.8Q44 501.2 44.6 502.4Q44.8 503.4 43.8 504.2L42.4 505.6Z" fill="#222"/><path d="M54.6 503L50.6 506L54.6 509" stroke="#b0b0b0" stroke-width="0.8" fill="none" /><path d="M59.6 510.4L68 501.8" stroke="#e03030" stroke-width="0.8" fill="none" /><path d="M756.4 502.6L760 506L756.4 509.4" stroke="#b0b8c0" stroke-width="0.8" fill="none" /><path d="M766.4 503.6L768.8 506L766.4 508.4M769.6 503.6L772 506L769.6 508.4" stroke="#a8b0b8" stroke-width="0.8" fill="none" /><circle cx="10.8" cy="523.6" r="2.90" fill="none" stroke="#222" stroke-width="1.32"/><path d="M13.73 524.81L15.27 525.45M12.01 526.53L12.65 528.07M9.59 526.53L8.95 528.07M7.87 524.81L6.33 525.45M7.87 522.39L6.33 521.75M9.59 520.67L8.95 519.13M12.01 520.67L12.65 519.13M13.73 522.39L15.27 521.75" stroke="#222" stroke-width="1.76" fill="none"/><path d="M17 530V528.2L15.2 530Z" fill="#444"/><path d="M691.6 516.8L695.4 520.4L691.6 524.2L687.8 520.4Z" stroke="#222" stroke-width="0.8" fill="#fff" /><path d="M691.6 516.8L695.4 520.4" stroke="#111" stroke-width="1.3" fill="none" /><path d="M689.8 520.8H693.4L691.6 522.6Z" fill="#e02020"/><path d="M695 521.6Q696.4 523.8 695.6 524.8Q694.6 525.4 694 524.4Q693.8 523.2 695 521.6Z" fill="#e02020"/><path d="M698.4 529.4L710.8 516.8" stroke="#d42020" stroke-width="1.2" fill="none" /><path d="M821.6 516.6Q819.6 519.4 819.6 522.6L820.8 525.6H822.4L823.6 522.6Q823.6 519.4 821.6 516.6ZM821.6 519V523" stroke="#444" stroke-width="0.6" fill="#fff" /><path d="M820.2 526.6H823V528.6H820.2Z" stroke="#444" stroke-width="0.6" fill="#ddd" /><rect x="979.4" y="518" width="10.6" height="8.6" rx="0.8" fill="#4aaee0" stroke="#666" stroke-width="0.6"/><path d="M979.8 518.4H989.6V522L988 521L986.4 522.4L984.8 521L983.2 522.4L981.6 521L979.8 522Z" fill="#e03030"/><path d="M981.4 528.8H988M984.7 526.8V528.8" stroke="#555" stroke-width="0.9" fill="none" />
<path d="M959.6 77L962.6 79.7L959.6 82.4ZM963 77L966 79.7L963 82.4Z" fill="#a8aeb4"/><path d="M972.6 77L978 82.4M978 77L972.6 82.4" stroke="#a0a6ac" stroke-width="0.8" fill="none" /><path d="M790.2 114V126.2L792.8 123.6L794.6 127.6L796.2 126.8L794.4 123H797.8Z" fill="#111"/><rect x="788" y="134.7" width="1.6" height="1.6" fill="#222"/><rect x="788" y="185.2" width="1.6" height="1.6" fill="#222"/><rect x="788" y="225.6" width="1.6" height="1.6" fill="#222"/><circle cx="796.6" cy="284.4" r="5.2" fill="#fff" stroke="#444" stroke-width="0.9"/><path d="M796.6 283.4V287.4" stroke="#444" stroke-width="0.9" fill="none" /><circle cx="796.6" cy="281.6" r="0.6" fill="#444"/><circle cx="796.6" cy="317.7" r="5.2" fill="#fff" stroke="#444" stroke-width="0.9"/><path d="M795 315.2V320.2L799.2 317.7Z" fill="#444"/><path d="M784.4 504V509.6H792.6V504M783.6 504.4L788.5 499.6L793.4 504.4M784.4 506.4H792.6M786.6 500.2L787.2 499" stroke="#333" stroke-width="0.8" fill="none" /><path d="M946.6 501.6V503.6H951.6V507.4H946.6V509.4L942 505.5Z" stroke="#c4c4c4" stroke-width="0.7" fill="#f4f4f4" /><path d="M960.4 501.6V503.6H955.4V507.4H960.4V509.4L965 505.5Z" stroke="#c4c4c4" stroke-width="0.7" fill="#f4f4f4" /><path d="M972.2 90.4V96.6L973.6 95.4L974.6 97.6L975.6 97.2L974.6 95H976.2Z" fill="#222"/><text x="976.6" y="94.4" font-size="5.4" fill="#333" font-family="Liberation Sans, sans-serif">?</text><path d="M973 152.4L975.4 150L977.8 152.4L975.4 154.8Z" stroke="#333" stroke-width="0.7" fill="#fff" /><path d="M977.4 148.6H980M977.4 150H980M977.4 151.4H980" stroke="#333" stroke-width="0.6" fill="none" /><circle cx="973.6" cy="153.8" r="0.8" fill="#d83030"/><path d="M972.2 221.2L975.8 219.2L979.4 221.2L975.8 223.2ZM972.2 223L975.8 225L979.4 223" stroke="#333" stroke-width="0.7" fill="none" /><path d="M972.4 277.4H979M975.7 274.1V280.7" stroke="#a0a0a0" stroke-width="0.9" fill="none" /><path d="M987.2 81V86L990 83.5Z" fill="#555"/><path d="M985.6 98.4L990.2 93.6" stroke="#9a9a9a" stroke-width="1.6" fill="none" /><path d="M989.6 92.6L991.2 91Q992.2 90.6 992.6 91.6Q992.8 92.4 992 93L990.8 94.2Z" fill="#8a8a8a"/><path d="M986.6 107L989.2 104.4L991.8 107" stroke="#b4b4b4" stroke-width="0.8" fill="none" /><path d="M985 122L993.4 113.6" stroke="#e03030" stroke-width="0.8" fill="none" /><path d="M986.6 490L989.4 492.8L992.2 490" stroke="#a8b0b8" stroke-width="0.8" fill="none" /><path d="M987 501L989.2 503.2L987 505.4M990 501L992.2 503.2L990 505.4" stroke="#a8b0b8" stroke-width="0.8" fill="none" />
<path d="M10 542.6L14.6 541.9V546.6H10ZM15.4 541.8L21.2 541V546.6H15.4ZM10 547.4H14.6V552.1L10 551.4ZM15.4 547.4H21.2V553L15.4 552.2Z" fill="#fff"/><circle cx="45.8" cy="545.6" r="3.2" fill="none" stroke="#333" stroke-width="0.9"/><path d="M43.4 548L39.6 551.8" stroke="#333" stroke-width="0.9" fill="none" /><clipPath id="sbx"><rect x="31.5" y="534" width="185.5" height="26"/></clipPath><ellipse cx="197" cy="560" rx="29" ry="4" fill="#9a9a9a" opacity="0.85" clip-path="url(#sbx)"/><path d="M169.4 546.4Q172 543.4 175.6 544.6Q179 546.4 179.6 550.6L181.6 554.8Q177.6 554.6 174.4 552.4Q170.6 550 169.4 546.4Z" fill="#e0321a"/><path d="M178.4 541.6Q180.6 538 183.8 537.6Q183.6 540.6 181.2 542.6Z" fill="#d85a1a"/><path d="M201.6 539.4Q205 537 208.8 538.6Q212.6 540.4 213.8 543.6Q209.4 545.6 206 543.6Q203 542 201.6 539.4Z" fill="#f0a818"/><path d="M189.8 539.4Q188 536.4 190 535.2Q192.2 534.6 192.8 536.8Q195 537.4 194.4 540.2" fill="none" stroke="#b4b4b4" stroke-width="1.8"/><path d="M200.4 544.4Q206.4 543.4 206.4 549Q206.2 554 200.4 554.4V552.2Q203.8 551.8 203.8 549Q203.6 546.4 200.4 546.6Z" fill="#e89a10"/><path d="M185 542.4Q193 540.6 201 542.4V554.6Q200.6 557.6 193 557.8Q185.4 557.6 185 554.6Z" fill="#f6b012"/><ellipse cx="193" cy="542.6" rx="8" ry="1.6" fill="#fbd04a"/><path d="M228.6 541.8V551.8M235.8 541.8V551.8M228.6 543.8H235.8M228.6 549.8H235.8" stroke="#dcdccc" stroke-width="1.0" fill="none" /><path d="M238.4 542V551.6" stroke="#dcdccc" stroke-width="0.9" fill="none" stroke-dasharray="2.6 1 1 1 3 1"/><defs><linearGradient id="ffg" x1="0.7" y1="0" x2="0.3" y2="1"><stop offset="0" stop-color="#ffe03a"/><stop offset="0.45" stop-color="#ff8a1e"/><stop offset="1" stop-color="#f0306a"/></linearGradient></defs><path d="M260.4 543.4Q261.4 541.6 263 541.2Q262.8 542.4 263.6 543Q266 540 268.4 538.8Q268.6 540.8 270.6 542Q274.6 544.6 274.2 549Q273.4 554.4 267.6 555.2Q261.6 555.6 259.6 550.6Q258.4 546.8 260.4 543.4Z" fill="url(#ffg)"/><circle cx="266.2" cy="547.8" r="3" fill="#7a3ae0"/><path d="M262.6 546.8Q263.4 543.8 267 544.2Q265.4 545.2 265.6 546.6Q264 546 262.6 546.8Z" fill="#ffb42a"/><path fill-rule="evenodd" d="M298.4 539.2C303 539.2 306.6 542.6 306.6 546.8C306.6 551 303 554.4 298.4 554.4C293.8 554.4 290.2 551 290.2 546.8C290.2 542.6 293.8 539.2 298.4 539.2ZM298.4 541.4C296.4 541.4 295 543.8 295 546.8C295 549.8 296.4 552.2 298.4 552.2C300.4 552.2 301.8 549.8 301.8 546.8C301.8 543.8 300.4 541.4 298.4 541.4Z" fill="#e0141e"/><rect x="324.4" y="539.2" width="12.6" height="15.4" rx="1" fill="#5a7a94" stroke="#8aa4ba" stroke-width="0.6"/><rect x="326" y="540.8" width="9.4" height="3.4" fill="#2a6ab4"/><rect x="326.0" y="545.4" width="2.6" height="2.3" fill="#d8e4ee"/><rect x="329.3" y="545.4" width="2.6" height="2.3" fill="#d8e4ee"/><rect x="332.6" y="545.4" width="2.6" height="2.3" fill="#d8e4ee"/><rect x="326.0" y="548.4" width="2.6" height="2.3" fill="#d8e4ee"/><rect x="329.3" y="548.4" width="2.6" height="2.3" fill="#d8e4ee"/><rect x="332.6" y="548.4" width="2.6" height="2.3" fill="#2a6ab4"/><rect x="326.0" y="551.4" width="2.6" height="2.3" fill="#d8e4ee"/><rect x="329.3" y="551.4" width="2.6" height="2.3" fill="#d8e4ee"/><rect x="332.6" y="551.4" width="2.6" height="2.3" fill="#2a6ab4"/><path d="M354.4 545.6L362.4 540.2L370.4 545.6V553.4H354.4Z" fill="#1a6ab8"/><path d="M356.2 545H368.6V549L362.4 552.6L356.2 549Z" fill="#e8f2fa"/><path d="M354.4 545.8L362.4 550.8L370.4 545.8V553.4H354.4Z" fill="#2f9ae8"/><circle cx="371" cy="553.4" r="4.4" fill="#1c1c1c" stroke="#d0d0d0" stroke-width="0.7"/><path d="M387.8 541.4Q387.8 540.4 388.8 540.4H393L394.4 541.8H401.4Q402.4 541.8 402.4 542.8V553H387.8Z" fill="#f2b526"/><path d="M387.8 544.4H402.4V553.2H387.8Z" fill="#fbd560"/><path d="M390.4 548.4H399.8V553.2H397.4V550.8H392.8V553.2H390.4Z" fill="#2a8ad8"/><path d="M422.6 539.2H435.4V550.6Q435.4 555.2 430.6 555.2H419.2V542.6Q419.2 539.2 422.6 539.2Z" fill="#8fd14a"/><path d="M422 543L423.4 541.8L432.6 550.8L431.8 552.4Z" fill="#fff"/><path d="M731 540.2Q734.4 538.4 737.6 540.8Q735.6 540.8 734.8 542.8Q734.4 545 736.6 546.4Q732.6 547.6 730.8 544.6Q730 542 731 540.2Z" fill="#f4b62a"/><path d="M727.6 553.6Q724.2 553.4 724.4 550.4Q724.8 548 727.4 548Q728.2 545 731.6 545.2Q734.6 545.4 735.6 548Q739 547.4 740.2 550.2Q740.8 553.4 737.6 553.6Z" fill="#9cc4ec"/><path d="M842.4 549L846.6 544.8L850.8 549" stroke="#d8d8d8" stroke-width="0.9" fill="none" /><path d="M860.6 543H865V551.4H860.6Z" stroke="#d0d0d0" stroke-width="0.7" fill="none" /><path d="M862 545.4H866.6V549.2H862Z" stroke="#d0d0d0" stroke-width="0.7" fill="#2a2a2a" /><rect x="873.8" y="544.6" width="8.8" height="5" rx="0.8" fill="#e8e8e8"/><rect x="872.6" y="546" width="1.2" height="2.2" fill="#e8e8e8"/><circle cx="873.6" cy="544.6" r="0.9" fill="#e8e8e8"/><path d="M890 551Q890.6 544.2 897.4 543.6M892.4 551Q892.8 546.6 897.4 546.2M894.8 551Q895.2 548.8 897.4 548.6" stroke="#bdbdbd" stroke-width="0.7" fill="none" /><circle cx="896.6" cy="550.6" r="0.7" fill="#e8e8e8"/><path d="M903.8 545.8H905.6L907.8 543.6V551.4L905.6 549.2H903.8Z" fill="none" stroke="#e0e0e0" stroke-width="0.7"/><path d="M909.4 545.8Q910.4 547.5 909.4 549.2M911 544.4Q912.8 547.5 911 550.6M912.6 543Q915.2 547.5 912.6 552" stroke="#d8d8d8" stroke-width="0.7" fill="none" /><path d="M992.6 534V560" stroke="#8a8a80" stroke-width="0.6"/><path d="M968.8 540.6H979V549.6H973L970.8 551.8V549.6H968.8Z" fill="#fff"/><path d="M970.8 543.4H977M970.8 546.2H977" stroke="#555" stroke-width="0.8" fill="none" /><circle cx="979.2" cy="551.9" r="4.3" fill="#1c1c1c" stroke="#d0d0d0" stroke-width="0.7"/>
<text x="235" y="35.8" font-size="6.2" fill="#222" font-family="Liberation Sans, sans-serif" textLength="11.5" lengthAdjust="spacingAndGlyphs">PDF</text>
<text x="4.2" y="254.6" font-size="15" fill="#222" font-family="Liberation Sans, sans-serif" textLength="10.4" lengthAdjust="spacingAndGlyphs">A</text>
<path d="M15.8 255.2V252.6L13.200000000000001 255.2Z" fill="#444"/>
<text transform="translate(973 102) rotate(90)" font-size="7" fill="#222" font-family="Liberation Sans, sans-serif" textLength="26.8" lengthAdjust="spacingAndGlyphs">Hinweise</text>
<text transform="translate(973 161) rotate(90)" font-size="7" fill="#222" font-family="Liberation Sans, sans-serif" textLength="42" lengthAdjust="spacingAndGlyphs">Eigenschaften</text>
<text transform="translate(973 232.7) rotate(90)" font-size="7" fill="#222" font-family="Liberation Sans, sans-serif" textLength="21.5" lengthAdjust="spacingAndGlyphs">Objekte</text>
</svg>
<span class="t" id="title" style="left:16px;top:2.07px;font-size:8.2px;line-height:10.66px;height:10.66px;color:#111;transform:scaleX(0.8224);">CorelDRAW SE (OEM-Version) - C:\Users\Christiane\Pictures\Hochhaus erledigt\Hoch Testbau01.cdr</span>
<span class="t" id="m_Datei" style="left:7.5px;top:15.73px;font-size:7.8px;line-height:10.14px;height:10.14px;color:#1a1a1a;transform:scaleX(0.8508);"><u>D</u>atei</span>
<span class="t" id="m_Bearbeiten" style="left:37.5px;top:15.73px;font-size:7.8px;line-height:10.14px;height:10.14px;color:#1a1a1a;transform:scaleX(0.8484);"><u>B</u>earbeiten</span>
<span class="t" id="m_Ansicht" style="left:84px;top:15.73px;font-size:7.8px;line-height:10.14px;height:10.14px;color:#1a1a1a;transform:scaleX(0.8210);"><u>A</u>nsicht</span>
<span class="t" id="m_Layout" style="left:119.5px;top:15.73px;font-size:7.8px;line-height:10.14px;height:10.14px;color:#1a1a1a;transform:scaleX(0.8539);"><u>L</u>ayout</span>
<span class="t" id="m_Objekt" style="left:154px;top:15.73px;font-size:7.8px;line-height:10.14px;height:10.14px;color:#1a1a1a;transform:scaleX(0.8649);">Ob<u>j</u>ekt</span>
<span class="t" id="m_Effekte" style="left:188.5px;top:15.73px;font-size:7.8px;line-height:10.14px;height:10.14px;color:#1a1a1a;transform:scaleX(0.8078);"><u>E</u>ffekte</span>
<span class="t" id="m_Bitmaps" style="left:222.5px;top:15.73px;font-size:7.8px;line-height:10.14px;height:10.14px;color:#1a1a1a;transform:scaleX(0.8697);">B<u>i</u>tmaps</span>
<span class="t" id="m_Text" style="left:261.3px;top:15.73px;font-size:7.8px;line-height:10.14px;height:10.14px;color:#1a1a1a;transform:scaleX(0.8664);">Te<u>x</u>t</span>
<span class="t" id="m_Tabelle" style="left:288px;top:15.73px;font-size:7.8px;line-height:10.14px;height:10.14px;color:#1a1a1a;transform:scaleX(0.8617);"><u>T</u>abelle</span>
<span class="t" id="m_Extras" style="left:324.5px;top:15.73px;font-size:7.8px;line-height:10.14px;height:10.14px;color:#1a1a1a;transform:scaleX(0.8141);">E<u>x</u>tras</span>
<span class="t" id="m_Fenster" style="left:357px;top:15.73px;font-size:7.8px;line-height:10.14px;height:10.14px;color:#1a1a1a;transform:scaleX(0.8208);"><u>F</u>enster</span>
<span class="t" id="m_Hilfe" style="left:393.3px;top:15.73px;font-size:7.8px;line-height:10.14px;height:10.14px;color:#1a1a1a;transform:scaleX(0.8777);"><u>H</u>ilfe</span>
<span class="t" id="zoom" style="left:257.5px;top:32.19px;font-size:7.4px;line-height:9.62px;height:9.62px;color:#333;transform:scaleX(0.8448);">54%</span>
<span class="t" id="ausr" style="left:410.5px;top:32.19px;font-size:7.4px;line-height:9.62px;height:9.62px;color:#111;transform:scaleX(0.8956);">Ausrich<u>t</u>en an</span>
<span class="t" id="start" style="left:510.5px;top:32.19px;font-size:7.4px;line-height:9.62px;height:9.62px;color:#111;transform:scaleX(0.9017);">Starten</span>
<span class="t" id="a4" style="left:5px;top:54.85px;font-size:7.0px;line-height:9.1px;height:9.1px;color:#333;transform:scaleX(0.8759);">A4</span>
<span class="t" id="w210" style="left:125px;top:50.29px;font-size:7.4px;line-height:9.62px;height:9.62px;color:#111;transform:scaleX(0.8973);">210,0 mm</span>
<span class="t" id="h297" style="left:125px;top:59.69px;font-size:7.4px;line-height:9.62px;height:9.62px;color:#111;transform:scaleX(0.8973);">297,0 mm</span>
<span class="t" id="einh" style="left:275.7px;top:54.92px;font-size:7.2px;line-height:9.36px;height:9.36px;color:#111;transform:scaleX(0.8540);">Einheiten:</span>
<span class="t" id="mmu" style="left:308px;top:54.92px;font-size:7.2px;line-height:9.36px;height:9.36px;color:#111;transform:scaleX(0.9593);">Millimeter</span>
<span class="t" id="nudge" style="left:394px;top:54.79px;font-size:7.4px;line-height:9.62px;height:9.62px;color:#111;transform:scaleX(0.9039);">2,54 mm</span>
<span class="t" id="dx" style="left:462.5px;top:50.29px;font-size:7.4px;line-height:9.62px;height:9.62px;color:#111;transform:scaleX(0.8865);">6,35 mm</span>
<span class="t" id="dy" style="left:462.5px;top:59.69px;font-size:7.4px;line-height:9.62px;height:9.62px;color:#111;transform:scaleX(0.8865);">6,35 mm</span>
<span class="t" id="doctab" style="left:34.5px;top:74.86px;font-size:7.6px;line-height:9.88px;height:9.88px;color:#1a2a3a;transform:scaleX(0.8975);">Hoch Testbau01.cdr</span>
<span class="t" id="rulmm" style="left:754.5px;top:86.72px;font-size:5.2px;line-height:6.76px;height:6.76px;color:#777;transform:scaleX(1.0134);">Millimeter</span>
<span class="t" id="p_hdr" style="left:783.7px;top:75.92px;font-size:7.2px;line-height:9.36px;height:9.36px;color:#111;transform:scaleX(0.9016);">Hinweise</span>
<span class="t" id="p_h1" style="left:787px;top:96.16px;font-size:9.6px;line-height:12.48px;height:12.48px;color:#1a1a1a;transform:scaleX(0.9398);">Objekte auswählen</span>
<span class="t" id="p_tool" style="left:801.7px;top:115.22px;font-size:7.5px;line-height:9.75px;height:9.75px;color:#111;transform:scaleX(0.9673);">Hilfsmittel <b>Auswahl</b></span>
<span class="t" id="p_l0" style="left:792px;top:130.96px;font-size:7.3px;line-height:9.49px;height:9.49px;color:#111;transform:scaleX(0.9712);">Klicken Sie auf ein Objekt, um es auszuwählen.</span>
<span class="t" id="p_l1" style="left:792px;top:140.46px;font-size:7.3px;line-height:9.49px;height:9.49px;color:#111;transform:scaleX(0.9971);">Halten Sie die <b>Alt-Taste</b> gedrückt, um ein Objekt</span>
<span class="t" id="p_l2" style="left:792px;top:149.76px;font-size:7.3px;line-height:9.49px;height:9.49px;color:#111;transform:scaleX(0.9783);">auszuwählen, das sich hinter einem anderen Objekt</span>
<span class="t" id="p_l3" style="left:792px;top:159.06px;font-size:7.3px;line-height:9.49px;height:9.49px;color:#111;transform:scaleX(0.9938);">befindet, oder halten Sie die <b>Strg-Taste</b> gedrückt,</span>
<span class="t" id="p_l4" style="left:792px;top:168.36px;font-size:7.3px;line-height:9.49px;height:9.49px;color:#111;transform:scaleX(0.9896);">um ein Objekt innerhalb einer Gruppe auszuwählen.</span>
<span class="t" id="p_l5" style="left:792px;top:181.46px;font-size:7.3px;line-height:9.49px;height:9.49px;color:#111;transform:scaleX(0.9639);">Halten Sie zum Auswählen mehrerer Objekte die</span>
<span class="t" id="p_l6" style="left:792px;top:190.76px;font-size:7.3px;line-height:9.49px;height:9.49px;color:#111;transform:scaleX(0.9862);">Umschalttaste gedrückt und klicken Sie auf jedes</span>
<span class="t" id="p_l7" style="left:792px;top:200.06px;font-size:7.3px;line-height:9.49px;height:9.49px;color:#111;transform:scaleX(0.9880);">Objekt bzw. ziehen Sie einen Markierungsrahmen um</span>
<span class="t" id="p_l8" style="left:792px;top:209.36px;font-size:7.3px;line-height:9.49px;height:9.49px;color:#111;transform:scaleX(0.9681);">die auszuwählenden Objekte.</span>
<span class="t" id="p_l9" style="left:792px;top:221.86px;font-size:7.3px;line-height:9.49px;height:9.49px;color:#111;transform:scaleX(0.9838);">Doppelklicken Sie auf das Hilfsmittel <b>Auswahl</b>, um</span>
<span class="t" id="p_l10" style="left:792px;top:231.16px;font-size:7.3px;line-height:9.49px;height:9.49px;color:#111;transform:scaleX(0.9685);">alle Objekte auszuwählen.</span>
<span class="t" id="p_h2" style="left:787px;top:259.96px;font-size:9.6px;line-height:12.48px;height:12.48px;color:#000;transform:scaleX(0.9821);"><b>Weitere Infos</b></span>
<span class="t" id="p_ht" style="left:809.7px;top:280.26px;font-size:7.6px;line-height:9.88px;height:9.88px;color:#000;transform:scaleX(1.0375);"><b>Hilfethemen</b></span>
<span class="t" id="p_l_obj" style="left:809.7px;top:292.06px;font-size:7.3px;line-height:9.49px;height:9.49px;color:#4597df;transform:scaleX(0.9714);">Objekte auswählen</span>
<span class="t" id="p_web" style="left:809.7px;top:313.56px;font-size:7.6px;line-height:9.88px;height:9.88px;color:#000;transform:scaleX(0.9655);"><b>Webinar</b></span>
<span class="t" id="p_w1" style="left:809.7px;top:325.45px;font-size:7.3px;line-height:9.49px;height:9.49px;color:#4597df;transform:scaleX(1.0012);">Die Arbeit mit Linien für nicht professionelle</span>
<span class="t" id="p_w2" style="left:809.7px;top:336.16px;font-size:7.3px;line-height:9.49px;height:9.49px;color:#4597df;transform:scaleX(0.9910);">Grafikdesigner <span style="color:#222">von Anand Dixit</span></span>
<span class="t" id="n_1" style="left:61px;top:489.79px;font-size:7.4px;line-height:9.62px;height:9.62px;color:#a8a8a8;transform:scaleX(1.0000);">1</span>
<span class="t" id="n_von" style="left:68px;top:489.79px;font-size:7.4px;line-height:9.62px;height:9.62px;color:#a8a8a8;transform:scaleX(0.9394);">von</span>
<span class="t" id="n_6" style="left:83px;top:489.79px;font-size:7.4px;line-height:9.62px;height:9.62px;color:#a8a8a8;transform:scaleX(1.0000);">6</span>
<span class="t" id="pg0" style="left:130px;top:489.99px;font-size:7.4px;line-height:9.62px;height:9.62px;color:#111;transform:scaleX(0.8690);">Seite 1</span>
<span class="t" id="pg1" style="left:160.5px;top:489.99px;font-size:7.4px;line-height:9.62px;height:9.62px;color:#8c8c8c;transform:scaleX(0.8907);">Seite 2</span>
<span class="t" id="pg2" style="left:191px;top:489.99px;font-size:7.4px;line-height:9.62px;height:9.62px;color:#8c8c8c;transform:scaleX(0.8907);">Seite 3</span>
<span class="t" id="pg3" style="left:221.5px;top:489.99px;font-size:7.4px;line-height:9.62px;height:9.62px;color:#8c8c8c;transform:scaleX(0.8907);">Seite 4</span>
<span class="t" id="pg4" style="left:252.3px;top:489.99px;font-size:7.4px;line-height:9.62px;height:9.62px;color:#8c8c8c;transform:scaleX(0.8907);">Seite 5</span>
<span class="t" id="pg5" style="left:283px;top:489.99px;font-size:7.4px;line-height:9.62px;height:9.62px;color:#8c8c8c;transform:scaleX(0.8820);">Seite 6</span>
<span class="t" id="hint" style="left:290.7px;top:501.85px;font-size:7.0px;line-height:9.1px;height:9.1px;color:#a6a6a6;font-style:italic;transform:scaleX(0.9163);">Farben (oder Objekte) hierher ziehen, um diese Farben mit dem Dokument zu speichern</span>
<span class="t" id="st_hint" style="left:21.2px;top:519.95px;font-size:7.0px;line-height:9.1px;height:9.1px;color:#111;transform:scaleX(0.9545);">Hilfsmittel-Hinweise</span>
<span class="t" id="st_keine" style="left:713.2px;top:519.05px;font-size:7.0px;line-height:9.1px;height:9.1px;color:#111;transform:scaleX(0.9103);">Keine</span>
<span class="t" id="st_cmyk" style="left:843px;top:519.05px;font-size:7.0px;line-height:9.1px;height:9.1px;color:#111;transform:scaleX(0.9332);">C:0 M:0 Y:0 K:100 Haarlinie</span>
<span class="t" id="tb_search" style="left:57px;top:540.64px;font-size:10.4px;line-height:13.52px;height:13.52px;color:#2b2b2b;transform:scaleX(0.9220);">Suchen</span>
<span class="t" id="tb_temp" style="left:746.6px;top:541.86px;font-size:9.6px;line-height:12.48px;height:12.48px;color:#fff;transform:scaleX(0.8778);">11°C</span>
<span class="t" id="tb_wx" style="left:770.4px;top:541.86px;font-size:9.6px;line-height:12.48px;height:12.48px;color:#fff;transform:scaleX(0.9723);">Stark bewölkt</span>
<span class="t" id="tb_time" style="left:930px;top:535.44px;font-size:8.4px;line-height:10.92px;height:10.92px;color:#fff;transform:scaleX(0.8680);">03:30</span>
<span class="t" id="tb_date" style="left:921px;top:547.84px;font-size:8.4px;line-height:10.92px;height:10.92px;color:#fff;transform:scaleX(0.8492);">14.09.2023</span>
<span class="t" id="tb_badge" style="left:977.6px;top:547.19px;font-size:7.4px;line-height:9.62px;height:9.62px;color:#fff;font-weight:bold;transform:scaleX(1.0000);">1</span>
<span class="t" id="tb_mailb" style="left:369.2px;top:548.45px;font-size:7.0px;line-height:9.1px;height:9.1px;color:#fff;font-weight:bold;transform:scaleX(1.0000);">1</span>
</div></body></html>
